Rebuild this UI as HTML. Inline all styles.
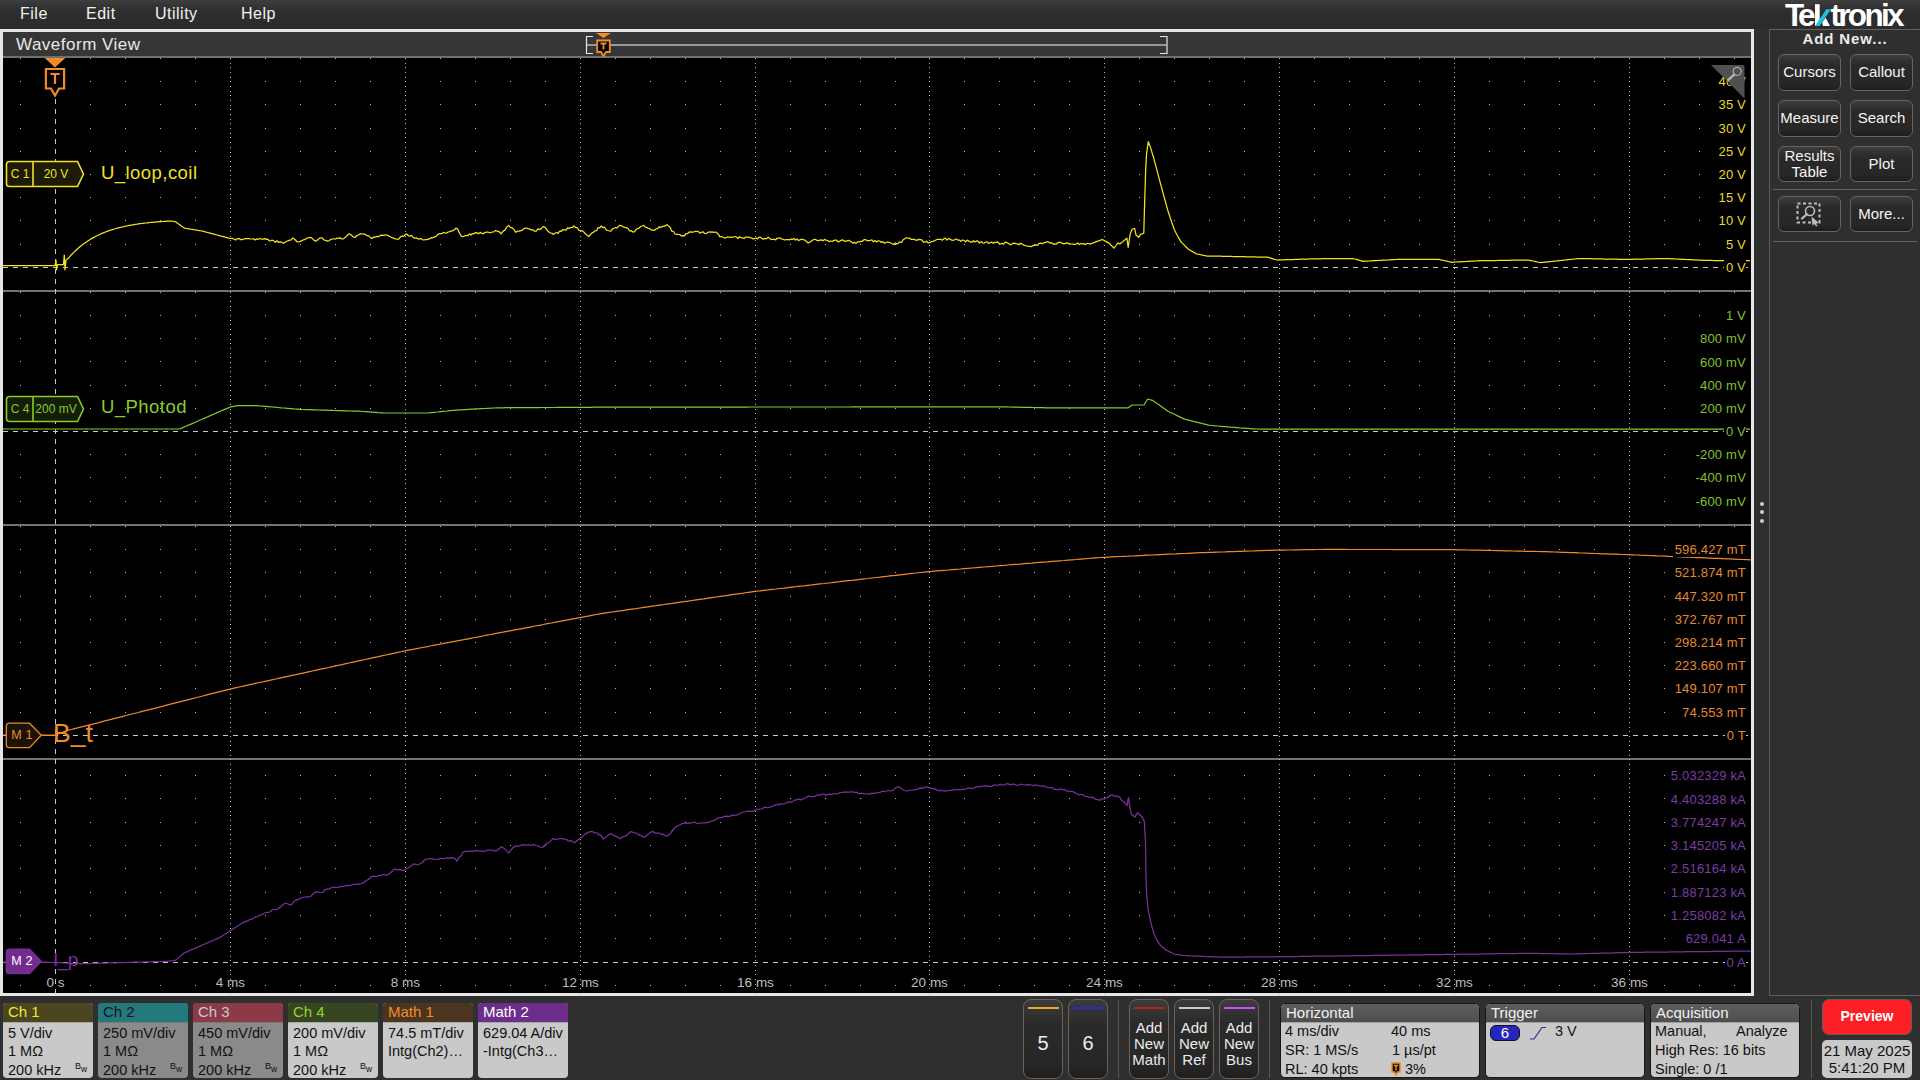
<!DOCTYPE html><html><head><meta charset="utf-8"><title>Tektronix Waveform View</title><style>
*{margin:0;padding:0;box-sizing:border-box}
html,body{width:1920px;height:1080px;overflow:hidden;background:#2f2f2f;font-family:"Liberation Sans",sans-serif}
.a{position:absolute}
.menu{left:0;top:0;width:1920px;height:29px;background:linear-gradient(#3e3e3e,#303030 9px,#2d2d2d 14px,#2c2c2c)}
.mi{top:5px;font-size:16px;color:#f2f2f2;letter-spacing:0.5px}
.btn{position:absolute;border:1px solid #6b625c;border-radius:6px;background:linear-gradient(#3c3c3c,#2a2a2a 30%,#262626 85%,#1e1e1e);color:#f4f4f4;text-align:center;font-size:15px}
.badge{position:absolute;border-radius:4px;overflow:hidden;background:#c8c8c8}
.bh{position:absolute;left:0;top:0;width:100%;height:19px;font-size:15px;padding-left:5px;line-height:17px}
.bb{position:absolute;left:0;top:19px;width:100%;bottom:0;border-top:1px solid #9a9a9a;font-size:14.5px;color:#111;padding-left:5px;line-height:19px;padding-top:0px}
.lab{position:absolute;font-size:13px;text-align:right;width:160px;line-height:14px}.lab span{background:#000;padding:0 0 0 2px;letter-spacing:0.2px}
.xl{position:absolute;font-size:13.5px;color:#bdbdbd;text-align:center;width:80px;line-height:16px}
.bw{position:absolute;font-size:9px;color:#111;line-height:9px}
</style></head><body><div class="a menu"></div><div class="a mi" style="left:20px">File</div><div class="a mi" style="left:86px">Edit</div><div class="a mi" style="left:155px">Utility</div><div class="a mi" style="left:241px">Help</div><div class="a" style="left:0;top:29px;width:1754px;height:967px;background:#e6e6e6"></div><div class="a" style="left:3px;top:32px;width:1748px;height:24px;background:#363636"></div><div class="a" style="left:3px;top:56px;width:1748px;height:2px;background:#6f6f6f"></div><div class="a" style="left:16px;top:35px;font-size:17px;color:#e8e8e8;letter-spacing:0.5px">Waveform View</div><div class="a" style="left:3px;top:58px;width:1748px;height:935px;background:#000"></div><div class="a" style="left:1769px;top:29px;width:1px;height:967px;background:#5a5a5a"></div><div class="a" style="left:1769px;top:29px;width:151px;height:1px;background:#6a5f58"></div><div class="a" style="left:1769px;top:995px;width:151px;height:1px;background:#6a5f58"></div><div class="a" style="left:1785px;top:-2px;font-size:31.5px;font-weight:bold;color:#fff;letter-spacing:-4px;line-height:34px">Te</div><svg class="a" style="left:1815px;top:0" width="18" height="30" viewBox="0 0 18 30"><rect x="0" y="4.2" width="4.7" height="21.8" fill="#fff"/><path d="M8 26H15L10.6 17.8L7.2 22.6Z" fill="#fff"/><path d="M0 26H4.6L15.9 9.2H11.3Z" fill="#1fc0e2"/></svg><div class="a" style="left:1830.5px;top:-2px;font-size:31.5px;font-weight:bold;color:#fff;letter-spacing:-2.7px;line-height:34px">tronix</div><div class="a" style="left:1770px;top:30px;width:150px;text-align:center;font-size:15px;font-weight:bold;color:#ececec;letter-spacing:0.9px">Add New...</div><div class="btn" style="left:1778px;top:54px;width:63px;height:37px;font-size:15px;line-height:33px;">Cursors</div><div class="btn" style="left:1850px;top:54px;width:63px;height:37px;font-size:15px;line-height:33px;">Callout</div><div class="btn" style="left:1778px;top:100px;width:63px;height:37px;font-size:15px;line-height:33px;">Measure</div><div class="btn" style="left:1850px;top:100px;width:63px;height:37px;font-size:15px;line-height:33px;">Search</div><div class="btn" style="left:1778px;top:146px;width:63px;height:36px;font-size:15px;"><div style="padding-top:1px;line-height:16px">Results<br>Table</div></div><div class="btn" style="left:1850px;top:146px;width:63px;height:36px;font-size:15px;line-height:33px;">Plot</div><div class="a" style="left:1773px;top:189px;width:144px;height:1px;background:#6a5f58"></div><div class="btn" style="left:1778px;top:196px;width:63px;height:36px;font-size:15px;"></div><div class="btn" style="left:1850px;top:196px;width:63px;height:36px;font-size:15px;line-height:33px;">More...</div><div class="a" style="left:1773px;top:241px;width:144px;height:1px;background:#6a5f58"></div><svg class="a" style="left:1795px;top:200px" width="30" height="28" viewBox="0 0 30 28">
<rect x="2.5" y="3.5" width="22" height="19" fill="none" stroke="#bdbdbd" stroke-width="2" stroke-dasharray="3 2.5"/>
<circle cx="15" cy="11" r="4.5" fill="none" stroke="#bdbdbd" stroke-width="1.6"/>
<line x1="11.8" y1="14.2" x2="7" y2="18.5" stroke="#bdbdbd" stroke-width="2.2" stroke-linecap="round"/>
<path d="M16.5 19.5 L24 26 L21 26.5 L22.5 29 L21 29.5 L19.5 27 L17.5 28.5 Z" fill="#bdbdbd" transform="translate(0,-3)"/>
</svg><div class="a" style="left:1760px;top:502px;width:4px;height:4px;border-radius:2px;background:#cfcfcf"></div><div class="a" style="left:1760px;top:510px;width:4px;height:4px;border-radius:2px;background:#cfcfcf"></div><div class="a" style="left:1760px;top:519px;width:4px;height:4px;border-radius:2px;background:#cfcfcf"></div><div class="badge" style="left:3px;top:1003px;width:90px;height:75px;background:#c9c9c9"><div class="bh" style="background:#4b4520;color:#f3e82e">Ch 1</div><div class="bb" style="border-top-color:#a8a8a8"><div class="a" style="left:5px;top:0.5px;white-space:nowrap;font-size:14.5px;color:#111">5 V/div</div><div class="a" style="left:5px;top:19.0px;white-space:nowrap;font-size:14.5px;color:#111">1 M&Omega;</div><div class="a" style="left:5px;top:37.5px;white-space:nowrap;font-size:14.5px;color:#111">200 kHz</div><div class="bw" style="left:72px;top:39px">B<span style="position:relative;top:3px;font-size:8.5px">w</span></div></div></div><div class="badge" style="left:98px;top:1003px;width:90px;height:75px;background:#8a8a8a"><div class="bh" style="background:#24797d;color:#141414">Ch 2</div><div class="bb" style="border-top-color:#7a7a7a"><div class="a" style="left:5px;top:0.5px;white-space:nowrap;font-size:14.5px;color:#111">250 mV/div</div><div class="a" style="left:5px;top:19.0px;white-space:nowrap;font-size:14.5px;color:#111">1 M&Omega;</div><div class="a" style="left:5px;top:37.5px;white-space:nowrap;font-size:14.5px;color:#111">200 kHz</div><div class="bw" style="left:72px;top:39px">B<span style="position:relative;top:3px;font-size:8.5px">w</span></div></div></div><div class="badge" style="left:193px;top:1003px;width:90px;height:75px;background:#8a8a8a"><div class="bh" style="background:#8c3a47;color:#c9c9c9">Ch 3</div><div class="bb" style="border-top-color:#7a7a7a"><div class="a" style="left:5px;top:0.5px;white-space:nowrap;font-size:14.5px;color:#111">450 mV/div</div><div class="a" style="left:5px;top:19.0px;white-space:nowrap;font-size:14.5px;color:#111">1 M&Omega;</div><div class="a" style="left:5px;top:37.5px;white-space:nowrap;font-size:14.5px;color:#111">200 kHz</div><div class="bw" style="left:72px;top:39px">B<span style="position:relative;top:3px;font-size:8.5px">w</span></div></div></div><div class="badge" style="left:288px;top:1003px;width:90px;height:75px;background:#c9c9c9"><div class="bh" style="background:#374620;color:#90d62c">Ch 4</div><div class="bb" style="border-top-color:#a8a8a8"><div class="a" style="left:5px;top:0.5px;white-space:nowrap;font-size:14.5px;color:#111">200 mV/div</div><div class="a" style="left:5px;top:19.0px;white-space:nowrap;font-size:14.5px;color:#111">1 M&Omega;</div><div class="a" style="left:5px;top:37.5px;white-space:nowrap;font-size:14.5px;color:#111">200 kHz</div><div class="bw" style="left:72px;top:39px">B<span style="position:relative;top:3px;font-size:8.5px">w</span></div></div></div><div class="badge" style="left:383px;top:1003px;width:90px;height:75px;background:#c9c9c9"><div class="bh" style="background:#4b3420;color:#f28d28">Math 1</div><div class="bb" style="border-top-color:#a8a8a8"><div class="a" style="left:5px;top:0.5px;white-space:nowrap;font-size:14.5px;color:#111">74.5 mT/div</div><div class="a" style="left:5px;top:19.0px;white-space:nowrap;font-size:14.5px;color:#111">Intg(Ch2)&hellip;</div></div></div><div class="badge" style="left:478px;top:1003px;width:90px;height:75px;background:#c9c9c9"><div class="bh" style="background:#6d2d8c;color:#ffffff">Math 2</div><div class="bb" style="border-top-color:#a8a8a8"><div class="a" style="left:5px;top:0.5px;white-space:nowrap;font-size:14.5px;color:#111">629.04 A/div</div><div class="a" style="left:5px;top:19.0px;white-space:nowrap;font-size:14.5px;color:#111">-Intg(Ch3&hellip;</div></div></div><div class="btn" style="left:1023px;top:999px;width:40px;height:80px;border-radius:8px"><div class="a" style="left:3.5px;top:7px;width:31px;height:2px;background:#f5a12e"></div><div class="a" style="left:0;top:31px;width:38px;text-align:center;font-size:20px;line-height:24px;color:#ececec">5</div></div><div class="btn" style="left:1068px;top:999px;width:40px;height:80px;border-radius:8px"><div class="a" style="left:3.5px;top:7px;width:31px;height:2px;background:#2a2ad2"></div><div class="a" style="left:0;top:31px;width:38px;text-align:center;font-size:20px;line-height:24px;color:#ececec">6</div></div><div class="a" style="left:1118px;top:1000px;width:1px;height:78px;background:#5c544e"></div><div class="btn" style="left:1129px;top:999px;width:40px;height:80px;border-radius:8px"><div class="a" style="left:3.5px;top:7px;width:31px;height:2px;background:#b22424"></div><div class="a" style="left:0;top:20px;width:38px;text-align:center;font-size:15px;line-height:16px;color:#ececec">Add<br>New<br>Math</div></div><div class="btn" style="left:1174px;top:999px;width:40px;height:80px;border-radius:8px"><div class="a" style="left:3.5px;top:7px;width:31px;height:2px;background:#c3c6d8"></div><div class="a" style="left:0;top:20px;width:38px;text-align:center;font-size:15px;line-height:16px;color:#ececec">Add<br>New<br>Ref</div></div><div class="btn" style="left:1219px;top:999px;width:40px;height:80px;border-radius:8px"><div class="a" style="left:3.5px;top:7px;width:31px;height:2px;background:#c455f2"></div><div class="a" style="left:0;top:20px;width:38px;text-align:center;font-size:15px;line-height:16px;color:#ececec">Add<br>New<br>Bus</div></div><div class="a" style="left:1269px;top:1000px;width:1px;height:78px;background:#5c544e"></div><div class="badge" style="left:1280px;top:1003px;width:200px;height:75px;background:#c9c9c9;border-radius:5px;border:1px solid #161616"><div class="bh" style="background:linear-gradient(#5e5e5e,#4e4e4e);color:#f2f2f2;height:18px;line-height:18px;font-size:15px">Horizontal</div><div class="a" style="left:0;top:18px;width:100%;height:1px;background:#a0a0a0"></div><div class="a" style="left:4px;top:19px;font-size:14.5px;color:#111;white-space:nowrap;">4 ms/div</div><div class="a" style="left:110px;top:19px;font-size:14.5px;color:#111;white-space:nowrap;">40 ms</div><div class="a" style="left:4px;top:38px;font-size:14.5px;color:#111;white-space:nowrap;">SR: 1 MS/s</div><div class="a" style="left:111px;top:38px;font-size:14.5px;color:#111;white-space:nowrap;">1 &micro;s/pt</div><div class="a" style="left:4px;top:57px;font-size:14.5px;color:#111;white-space:nowrap;">RL: 40 kpts</div><div class="a" style="left:124px;top:57px;font-size:14.5px;color:#111;white-space:nowrap;">3%</div><svg class="a" style="left:110px;top:58px" width="10" height="14" viewBox="0 0 10 14"><path d="M1 1H9V10H6.5L5 13L3.5 10H1Z" fill="#111" stroke="#f08a24" stroke-width="1.5"/><path d="M3 3.5H7M5 3.5V8.5" stroke="#f08a24" stroke-width="1.4"/></svg></div><div class="badge" style="left:1485px;top:1003px;width:160px;height:75px;background:#c9c9c9;border-radius:5px;border:1px solid #161616"><div class="bh" style="background:linear-gradient(#5e5e5e,#4e4e4e);color:#f2f2f2;height:18px;line-height:18px;font-size:15px">Trigger</div><div class="a" style="left:0;top:18px;width:100%;height:1px;background:#a0a0a0"></div><div class="a" style="left:4px;top:21px;width:30px;height:16px;border-radius:6px;background:#2626bc;border:1px solid #111;color:#fff;text-align:center;font-size:15px;line-height:14px">6</div><svg class="a" style="left:43px;top:22px" width="18" height="14" viewBox="0 0 18 14"><path d="M1 13H5L13 1.5H17" fill="none" stroke="#2a2a8a" stroke-width="1.2"/></svg><div class="a" style="left:69px;top:19px;font-size:14.5px;color:#111;white-space:nowrap;">3 V</div></div><div class="badge" style="left:1650px;top:1003px;width:150px;height:75px;background:#c9c9c9;border-radius:5px;border:1px solid #161616"><div class="bh" style="background:linear-gradient(#5e5e5e,#4e4e4e);color:#f2f2f2;height:18px;line-height:18px;font-size:15px">Acquisition</div><div class="a" style="left:0;top:18px;width:100%;height:1px;background:#a0a0a0"></div><div class="a" style="left:4px;top:19px;font-size:14.5px;color:#111;white-space:nowrap;">Manual,</div><div class="a" style="left:85px;top:19px;font-size:14.5px;color:#111;white-space:nowrap;">Analyze</div><div class="a" style="left:4px;top:38px;font-size:14.5px;color:#111;white-space:nowrap;">High Res: 16 bits</div><div class="a" style="left:4px;top:57px;font-size:14.5px;color:#111;white-space:nowrap;">Single: 0 /1</div></div><div class="a" style="left:1811px;top:1000px;width:1px;height:78px;background:#5c544e"></div><div class="a" style="left:1822px;top:999px;width:90px;height:36px;border-radius:7px;background:#fd1f26;border:1px solid #6a5a5a;color:#fff;font-weight:bold;font-size:14px;text-align:center;line-height:33px">Preview</div><div class="a" style="left:1822px;top:1040px;width:90px;height:38px;border-radius:5px;background:#c9c9c9;color:#111;font-size:15px;text-align:center;line-height:17px;padding-top:2px">21 May 2025<br>5:41:20 PM</div><svg class="a" style="left:0;top:0" width="1754" height="996" viewBox="0 0 1754 996" shape-rendering="crispEdges"><rect x="3" y="290" width="1748" height="2" fill="#737373"/><rect x="3" y="524" width="1748" height="2" fill="#737373"/><rect x="3" y="758" width="1748" height="2" fill="#737373"/><path d="M20 58h1v1h-1zM90 58h1v1h-1zM125 58h1v1h-1zM160 58h1v1h-1zM195 58h1v1h-1zM265 58h1v1h-1zM300 58h1v1h-1zM335 58h1v1h-1zM370 58h1v1h-1zM440 58h1v1h-1zM475 58h1v1h-1zM510 58h1v1h-1zM545 58h1v1h-1zM615 58h1v1h-1zM650 58h1v1h-1zM685 58h1v1h-1zM720 58h1v1h-1zM790 58h1v1h-1zM825 58h1v1h-1zM860 58h1v1h-1zM895 58h1v1h-1zM964 58h1v1h-1zM999 58h1v1h-1zM1034 58h1v1h-1zM1069 58h1v1h-1zM1139 58h1v1h-1zM1174 58h1v1h-1zM1209 58h1v1h-1zM1244 58h1v1h-1zM1314 58h1v1h-1zM1349 58h1v1h-1zM1384 58h1v1h-1zM1419 58h1v1h-1zM1489 58h1v1h-1zM1524 58h1v1h-1zM1559 58h1v1h-1zM1594 58h1v1h-1zM1664 58h1v1h-1zM1699 58h1v1h-1zM1734 58h1v1h-1zM1769 58h1v1h-1zM1664 58h1v1h-1zM1699 58h1v1h-1zM1734 58h1v1h-1zM20 81h1v1h-1zM90 81h1v1h-1zM125 81h1v1h-1zM160 81h1v1h-1zM195 81h1v1h-1zM265 81h1v1h-1zM300 81h1v1h-1zM335 81h1v1h-1zM370 81h1v1h-1zM440 81h1v1h-1zM475 81h1v1h-1zM510 81h1v1h-1zM545 81h1v1h-1zM615 81h1v1h-1zM650 81h1v1h-1zM685 81h1v1h-1zM720 81h1v1h-1zM790 81h1v1h-1zM825 81h1v1h-1zM860 81h1v1h-1zM895 81h1v1h-1zM964 81h1v1h-1zM999 81h1v1h-1zM1034 81h1v1h-1zM1069 81h1v1h-1zM1139 81h1v1h-1zM1174 81h1v1h-1zM1209 81h1v1h-1zM1244 81h1v1h-1zM1314 81h1v1h-1zM1349 81h1v1h-1zM1384 81h1v1h-1zM1419 81h1v1h-1zM1489 81h1v1h-1zM1524 81h1v1h-1zM1559 81h1v1h-1zM1594 81h1v1h-1zM1664 81h1v1h-1zM1699 81h1v1h-1zM1734 81h1v1h-1zM1769 81h1v1h-1zM1664 81h1v1h-1zM1699 81h1v1h-1zM1734 81h1v1h-1zM20 104h1v1h-1zM90 104h1v1h-1zM125 104h1v1h-1zM160 104h1v1h-1zM195 104h1v1h-1zM265 104h1v1h-1zM300 104h1v1h-1zM335 104h1v1h-1zM370 104h1v1h-1zM440 104h1v1h-1zM475 104h1v1h-1zM510 104h1v1h-1zM545 104h1v1h-1zM615 104h1v1h-1zM650 104h1v1h-1zM685 104h1v1h-1zM720 104h1v1h-1zM790 104h1v1h-1zM825 104h1v1h-1zM860 104h1v1h-1zM895 104h1v1h-1zM964 104h1v1h-1zM999 104h1v1h-1zM1034 104h1v1h-1zM1069 104h1v1h-1zM1139 104h1v1h-1zM1174 104h1v1h-1zM1209 104h1v1h-1zM1244 104h1v1h-1zM1314 104h1v1h-1zM1349 104h1v1h-1zM1384 104h1v1h-1zM1419 104h1v1h-1zM1489 104h1v1h-1zM1524 104h1v1h-1zM1559 104h1v1h-1zM1594 104h1v1h-1zM1664 104h1v1h-1zM1699 104h1v1h-1zM1734 104h1v1h-1zM1769 104h1v1h-1zM1664 104h1v1h-1zM1699 104h1v1h-1zM1734 104h1v1h-1zM20 128h1v1h-1zM90 128h1v1h-1zM125 128h1v1h-1zM160 128h1v1h-1zM195 128h1v1h-1zM265 128h1v1h-1zM300 128h1v1h-1zM335 128h1v1h-1zM370 128h1v1h-1zM440 128h1v1h-1zM475 128h1v1h-1zM510 128h1v1h-1zM545 128h1v1h-1zM615 128h1v1h-1zM650 128h1v1h-1zM685 128h1v1h-1zM720 128h1v1h-1zM790 128h1v1h-1zM825 128h1v1h-1zM860 128h1v1h-1zM895 128h1v1h-1zM964 128h1v1h-1zM999 128h1v1h-1zM1034 128h1v1h-1zM1069 128h1v1h-1zM1139 128h1v1h-1zM1174 128h1v1h-1zM1209 128h1v1h-1zM1244 128h1v1h-1zM1314 128h1v1h-1zM1349 128h1v1h-1zM1384 128h1v1h-1zM1419 128h1v1h-1zM1489 128h1v1h-1zM1524 128h1v1h-1zM1559 128h1v1h-1zM1594 128h1v1h-1zM1664 128h1v1h-1zM1699 128h1v1h-1zM1734 128h1v1h-1zM1769 128h1v1h-1zM1664 128h1v1h-1zM1699 128h1v1h-1zM1734 128h1v1h-1zM20 151h1v1h-1zM90 151h1v1h-1zM125 151h1v1h-1zM160 151h1v1h-1zM195 151h1v1h-1zM265 151h1v1h-1zM300 151h1v1h-1zM335 151h1v1h-1zM370 151h1v1h-1zM440 151h1v1h-1zM475 151h1v1h-1zM510 151h1v1h-1zM545 151h1v1h-1zM615 151h1v1h-1zM650 151h1v1h-1zM685 151h1v1h-1zM720 151h1v1h-1zM790 151h1v1h-1zM825 151h1v1h-1zM860 151h1v1h-1zM895 151h1v1h-1zM964 151h1v1h-1zM999 151h1v1h-1zM1034 151h1v1h-1zM1069 151h1v1h-1zM1139 151h1v1h-1zM1174 151h1v1h-1zM1209 151h1v1h-1zM1244 151h1v1h-1zM1314 151h1v1h-1zM1349 151h1v1h-1zM1384 151h1v1h-1zM1419 151h1v1h-1zM1489 151h1v1h-1zM1524 151h1v1h-1zM1559 151h1v1h-1zM1594 151h1v1h-1zM1664 151h1v1h-1zM1699 151h1v1h-1zM1734 151h1v1h-1zM1769 151h1v1h-1zM1664 151h1v1h-1zM1699 151h1v1h-1zM1734 151h1v1h-1zM20 174h1v1h-1zM90 174h1v1h-1zM125 174h1v1h-1zM160 174h1v1h-1zM195 174h1v1h-1zM265 174h1v1h-1zM300 174h1v1h-1zM335 174h1v1h-1zM370 174h1v1h-1zM440 174h1v1h-1zM475 174h1v1h-1zM510 174h1v1h-1zM545 174h1v1h-1zM615 174h1v1h-1zM650 174h1v1h-1zM685 174h1v1h-1zM720 174h1v1h-1zM790 174h1v1h-1zM825 174h1v1h-1zM860 174h1v1h-1zM895 174h1v1h-1zM964 174h1v1h-1zM999 174h1v1h-1zM1034 174h1v1h-1zM1069 174h1v1h-1zM1139 174h1v1h-1zM1174 174h1v1h-1zM1209 174h1v1h-1zM1244 174h1v1h-1zM1314 174h1v1h-1zM1349 174h1v1h-1zM1384 174h1v1h-1zM1419 174h1v1h-1zM1489 174h1v1h-1zM1524 174h1v1h-1zM1559 174h1v1h-1zM1594 174h1v1h-1zM1664 174h1v1h-1zM1699 174h1v1h-1zM1734 174h1v1h-1zM1769 174h1v1h-1zM1664 174h1v1h-1zM1699 174h1v1h-1zM1734 174h1v1h-1zM20 197h1v1h-1zM90 197h1v1h-1zM125 197h1v1h-1zM160 197h1v1h-1zM195 197h1v1h-1zM265 197h1v1h-1zM300 197h1v1h-1zM335 197h1v1h-1zM370 197h1v1h-1zM440 197h1v1h-1zM475 197h1v1h-1zM510 197h1v1h-1zM545 197h1v1h-1zM615 197h1v1h-1zM650 197h1v1h-1zM685 197h1v1h-1zM720 197h1v1h-1zM790 197h1v1h-1zM825 197h1v1h-1zM860 197h1v1h-1zM895 197h1v1h-1zM964 197h1v1h-1zM999 197h1v1h-1zM1034 197h1v1h-1zM1069 197h1v1h-1zM1139 197h1v1h-1zM1174 197h1v1h-1zM1209 197h1v1h-1zM1244 197h1v1h-1zM1314 197h1v1h-1zM1349 197h1v1h-1zM1384 197h1v1h-1zM1419 197h1v1h-1zM1489 197h1v1h-1zM1524 197h1v1h-1zM1559 197h1v1h-1zM1594 197h1v1h-1zM1664 197h1v1h-1zM1699 197h1v1h-1zM1734 197h1v1h-1zM1769 197h1v1h-1zM1664 197h1v1h-1zM1699 197h1v1h-1zM1734 197h1v1h-1zM20 220h1v1h-1zM90 220h1v1h-1zM125 220h1v1h-1zM160 220h1v1h-1zM195 220h1v1h-1zM265 220h1v1h-1zM300 220h1v1h-1zM335 220h1v1h-1zM370 220h1v1h-1zM440 220h1v1h-1zM475 220h1v1h-1zM510 220h1v1h-1zM545 220h1v1h-1zM615 220h1v1h-1zM650 220h1v1h-1zM685 220h1v1h-1zM720 220h1v1h-1zM790 220h1v1h-1zM825 220h1v1h-1zM860 220h1v1h-1zM895 220h1v1h-1zM964 220h1v1h-1zM999 220h1v1h-1zM1034 220h1v1h-1zM1069 220h1v1h-1zM1139 220h1v1h-1zM1174 220h1v1h-1zM1209 220h1v1h-1zM1244 220h1v1h-1zM1314 220h1v1h-1zM1349 220h1v1h-1zM1384 220h1v1h-1zM1419 220h1v1h-1zM1489 220h1v1h-1zM1524 220h1v1h-1zM1559 220h1v1h-1zM1594 220h1v1h-1zM1664 220h1v1h-1zM1699 220h1v1h-1zM1734 220h1v1h-1zM1769 220h1v1h-1zM1664 220h1v1h-1zM1699 220h1v1h-1zM1734 220h1v1h-1zM20 244h1v1h-1zM90 244h1v1h-1zM125 244h1v1h-1zM160 244h1v1h-1zM195 244h1v1h-1zM265 244h1v1h-1zM300 244h1v1h-1zM335 244h1v1h-1zM370 244h1v1h-1zM440 244h1v1h-1zM475 244h1v1h-1zM510 244h1v1h-1zM545 244h1v1h-1zM615 244h1v1h-1zM650 244h1v1h-1zM685 244h1v1h-1zM720 244h1v1h-1zM790 244h1v1h-1zM825 244h1v1h-1zM860 244h1v1h-1zM895 244h1v1h-1zM964 244h1v1h-1zM999 244h1v1h-1zM1034 244h1v1h-1zM1069 244h1v1h-1zM1139 244h1v1h-1zM1174 244h1v1h-1zM1209 244h1v1h-1zM1244 244h1v1h-1zM1314 244h1v1h-1zM1349 244h1v1h-1zM1384 244h1v1h-1zM1419 244h1v1h-1zM1489 244h1v1h-1zM1524 244h1v1h-1zM1559 244h1v1h-1zM1594 244h1v1h-1zM1664 244h1v1h-1zM1699 244h1v1h-1zM1734 244h1v1h-1zM1769 244h1v1h-1zM1664 244h1v1h-1zM1699 244h1v1h-1zM1734 244h1v1h-1zM20 292h1v1h-1zM90 292h1v1h-1zM125 292h1v1h-1zM160 292h1v1h-1zM195 292h1v1h-1zM265 292h1v1h-1zM300 292h1v1h-1zM335 292h1v1h-1zM370 292h1v1h-1zM440 292h1v1h-1zM475 292h1v1h-1zM510 292h1v1h-1zM545 292h1v1h-1zM615 292h1v1h-1zM650 292h1v1h-1zM685 292h1v1h-1zM720 292h1v1h-1zM790 292h1v1h-1zM825 292h1v1h-1zM860 292h1v1h-1zM895 292h1v1h-1zM964 292h1v1h-1zM999 292h1v1h-1zM1034 292h1v1h-1zM1069 292h1v1h-1zM1139 292h1v1h-1zM1174 292h1v1h-1zM1209 292h1v1h-1zM1244 292h1v1h-1zM1314 292h1v1h-1zM1349 292h1v1h-1zM1384 292h1v1h-1zM1419 292h1v1h-1zM1489 292h1v1h-1zM1524 292h1v1h-1zM1559 292h1v1h-1zM1594 292h1v1h-1zM1664 292h1v1h-1zM1699 292h1v1h-1zM1734 292h1v1h-1zM1769 292h1v1h-1zM1664 292h1v1h-1zM1699 292h1v1h-1zM1734 292h1v1h-1zM20 315h1v1h-1zM90 315h1v1h-1zM125 315h1v1h-1zM160 315h1v1h-1zM195 315h1v1h-1zM265 315h1v1h-1zM300 315h1v1h-1zM335 315h1v1h-1zM370 315h1v1h-1zM440 315h1v1h-1zM475 315h1v1h-1zM510 315h1v1h-1zM545 315h1v1h-1zM615 315h1v1h-1zM650 315h1v1h-1zM685 315h1v1h-1zM720 315h1v1h-1zM790 315h1v1h-1zM825 315h1v1h-1zM860 315h1v1h-1zM895 315h1v1h-1zM964 315h1v1h-1zM999 315h1v1h-1zM1034 315h1v1h-1zM1069 315h1v1h-1zM1139 315h1v1h-1zM1174 315h1v1h-1zM1209 315h1v1h-1zM1244 315h1v1h-1zM1314 315h1v1h-1zM1349 315h1v1h-1zM1384 315h1v1h-1zM1419 315h1v1h-1zM1489 315h1v1h-1zM1524 315h1v1h-1zM1559 315h1v1h-1zM1594 315h1v1h-1zM1664 315h1v1h-1zM1699 315h1v1h-1zM1734 315h1v1h-1zM1769 315h1v1h-1zM1664 315h1v1h-1zM1699 315h1v1h-1zM1734 315h1v1h-1zM20 338h1v1h-1zM90 338h1v1h-1zM125 338h1v1h-1zM160 338h1v1h-1zM195 338h1v1h-1zM265 338h1v1h-1zM300 338h1v1h-1zM335 338h1v1h-1zM370 338h1v1h-1zM440 338h1v1h-1zM475 338h1v1h-1zM510 338h1v1h-1zM545 338h1v1h-1zM615 338h1v1h-1zM650 338h1v1h-1zM685 338h1v1h-1zM720 338h1v1h-1zM790 338h1v1h-1zM825 338h1v1h-1zM860 338h1v1h-1zM895 338h1v1h-1zM964 338h1v1h-1zM999 338h1v1h-1zM1034 338h1v1h-1zM1069 338h1v1h-1zM1139 338h1v1h-1zM1174 338h1v1h-1zM1209 338h1v1h-1zM1244 338h1v1h-1zM1314 338h1v1h-1zM1349 338h1v1h-1zM1384 338h1v1h-1zM1419 338h1v1h-1zM1489 338h1v1h-1zM1524 338h1v1h-1zM1559 338h1v1h-1zM1594 338h1v1h-1zM1664 338h1v1h-1zM1699 338h1v1h-1zM1734 338h1v1h-1zM1769 338h1v1h-1zM1664 338h1v1h-1zM1699 338h1v1h-1zM1734 338h1v1h-1zM20 361h1v1h-1zM90 361h1v1h-1zM125 361h1v1h-1zM160 361h1v1h-1zM195 361h1v1h-1zM265 361h1v1h-1zM300 361h1v1h-1zM335 361h1v1h-1zM370 361h1v1h-1zM440 361h1v1h-1zM475 361h1v1h-1zM510 361h1v1h-1zM545 361h1v1h-1zM615 361h1v1h-1zM650 361h1v1h-1zM685 361h1v1h-1zM720 361h1v1h-1zM790 361h1v1h-1zM825 361h1v1h-1zM860 361h1v1h-1zM895 361h1v1h-1zM964 361h1v1h-1zM999 361h1v1h-1zM1034 361h1v1h-1zM1069 361h1v1h-1zM1139 361h1v1h-1zM1174 361h1v1h-1zM1209 361h1v1h-1zM1244 361h1v1h-1zM1314 361h1v1h-1zM1349 361h1v1h-1zM1384 361h1v1h-1zM1419 361h1v1h-1zM1489 361h1v1h-1zM1524 361h1v1h-1zM1559 361h1v1h-1zM1594 361h1v1h-1zM1664 361h1v1h-1zM1699 361h1v1h-1zM1734 361h1v1h-1zM1769 361h1v1h-1zM1664 361h1v1h-1zM1699 361h1v1h-1zM1734 361h1v1h-1zM20 385h1v1h-1zM90 385h1v1h-1zM125 385h1v1h-1zM160 385h1v1h-1zM195 385h1v1h-1zM265 385h1v1h-1zM300 385h1v1h-1zM335 385h1v1h-1zM370 385h1v1h-1zM440 385h1v1h-1zM475 385h1v1h-1zM510 385h1v1h-1zM545 385h1v1h-1zM615 385h1v1h-1zM650 385h1v1h-1zM685 385h1v1h-1zM720 385h1v1h-1zM790 385h1v1h-1zM825 385h1v1h-1zM860 385h1v1h-1zM895 385h1v1h-1zM964 385h1v1h-1zM999 385h1v1h-1zM1034 385h1v1h-1zM1069 385h1v1h-1zM1139 385h1v1h-1zM1174 385h1v1h-1zM1209 385h1v1h-1zM1244 385h1v1h-1zM1314 385h1v1h-1zM1349 385h1v1h-1zM1384 385h1v1h-1zM1419 385h1v1h-1zM1489 385h1v1h-1zM1524 385h1v1h-1zM1559 385h1v1h-1zM1594 385h1v1h-1zM1664 385h1v1h-1zM1699 385h1v1h-1zM1734 385h1v1h-1zM1769 385h1v1h-1zM1664 385h1v1h-1zM1699 385h1v1h-1zM1734 385h1v1h-1zM20 408h1v1h-1zM90 408h1v1h-1zM125 408h1v1h-1zM160 408h1v1h-1zM195 408h1v1h-1zM265 408h1v1h-1zM300 408h1v1h-1zM335 408h1v1h-1zM370 408h1v1h-1zM440 408h1v1h-1zM475 408h1v1h-1zM510 408h1v1h-1zM545 408h1v1h-1zM615 408h1v1h-1zM650 408h1v1h-1zM685 408h1v1h-1zM720 408h1v1h-1zM790 408h1v1h-1zM825 408h1v1h-1zM860 408h1v1h-1zM895 408h1v1h-1zM964 408h1v1h-1zM999 408h1v1h-1zM1034 408h1v1h-1zM1069 408h1v1h-1zM1139 408h1v1h-1zM1174 408h1v1h-1zM1209 408h1v1h-1zM1244 408h1v1h-1zM1314 408h1v1h-1zM1349 408h1v1h-1zM1384 408h1v1h-1zM1419 408h1v1h-1zM1489 408h1v1h-1zM1524 408h1v1h-1zM1559 408h1v1h-1zM1594 408h1v1h-1zM1664 408h1v1h-1zM1699 408h1v1h-1zM1734 408h1v1h-1zM1769 408h1v1h-1zM1664 408h1v1h-1zM1699 408h1v1h-1zM1734 408h1v1h-1zM20 454h1v1h-1zM90 454h1v1h-1zM125 454h1v1h-1zM160 454h1v1h-1zM195 454h1v1h-1zM265 454h1v1h-1zM300 454h1v1h-1zM335 454h1v1h-1zM370 454h1v1h-1zM440 454h1v1h-1zM475 454h1v1h-1zM510 454h1v1h-1zM545 454h1v1h-1zM615 454h1v1h-1zM650 454h1v1h-1zM685 454h1v1h-1zM720 454h1v1h-1zM790 454h1v1h-1zM825 454h1v1h-1zM860 454h1v1h-1zM895 454h1v1h-1zM964 454h1v1h-1zM999 454h1v1h-1zM1034 454h1v1h-1zM1069 454h1v1h-1zM1139 454h1v1h-1zM1174 454h1v1h-1zM1209 454h1v1h-1zM1244 454h1v1h-1zM1314 454h1v1h-1zM1349 454h1v1h-1zM1384 454h1v1h-1zM1419 454h1v1h-1zM1489 454h1v1h-1zM1524 454h1v1h-1zM1559 454h1v1h-1zM1594 454h1v1h-1zM1664 454h1v1h-1zM1699 454h1v1h-1zM1734 454h1v1h-1zM1769 454h1v1h-1zM1664 454h1v1h-1zM1699 454h1v1h-1zM1734 454h1v1h-1zM20 477h1v1h-1zM90 477h1v1h-1zM125 477h1v1h-1zM160 477h1v1h-1zM195 477h1v1h-1zM265 477h1v1h-1zM300 477h1v1h-1zM335 477h1v1h-1zM370 477h1v1h-1zM440 477h1v1h-1zM475 477h1v1h-1zM510 477h1v1h-1zM545 477h1v1h-1zM615 477h1v1h-1zM650 477h1v1h-1zM685 477h1v1h-1zM720 477h1v1h-1zM790 477h1v1h-1zM825 477h1v1h-1zM860 477h1v1h-1zM895 477h1v1h-1zM964 477h1v1h-1zM999 477h1v1h-1zM1034 477h1v1h-1zM1069 477h1v1h-1zM1139 477h1v1h-1zM1174 477h1v1h-1zM1209 477h1v1h-1zM1244 477h1v1h-1zM1314 477h1v1h-1zM1349 477h1v1h-1zM1384 477h1v1h-1zM1419 477h1v1h-1zM1489 477h1v1h-1zM1524 477h1v1h-1zM1559 477h1v1h-1zM1594 477h1v1h-1zM1664 477h1v1h-1zM1699 477h1v1h-1zM1734 477h1v1h-1zM1769 477h1v1h-1zM1664 477h1v1h-1zM1699 477h1v1h-1zM1734 477h1v1h-1zM20 501h1v1h-1zM90 501h1v1h-1zM125 501h1v1h-1zM160 501h1v1h-1zM195 501h1v1h-1zM265 501h1v1h-1zM300 501h1v1h-1zM335 501h1v1h-1zM370 501h1v1h-1zM440 501h1v1h-1zM475 501h1v1h-1zM510 501h1v1h-1zM545 501h1v1h-1zM615 501h1v1h-1zM650 501h1v1h-1zM685 501h1v1h-1zM720 501h1v1h-1zM790 501h1v1h-1zM825 501h1v1h-1zM860 501h1v1h-1zM895 501h1v1h-1zM964 501h1v1h-1zM999 501h1v1h-1zM1034 501h1v1h-1zM1069 501h1v1h-1zM1139 501h1v1h-1zM1174 501h1v1h-1zM1209 501h1v1h-1zM1244 501h1v1h-1zM1314 501h1v1h-1zM1349 501h1v1h-1zM1384 501h1v1h-1zM1419 501h1v1h-1zM1489 501h1v1h-1zM1524 501h1v1h-1zM1559 501h1v1h-1zM1594 501h1v1h-1zM1664 501h1v1h-1zM1699 501h1v1h-1zM1734 501h1v1h-1zM1769 501h1v1h-1zM1664 501h1v1h-1zM1699 501h1v1h-1zM1734 501h1v1h-1zM20 526h1v1h-1zM90 526h1v1h-1zM125 526h1v1h-1zM160 526h1v1h-1zM195 526h1v1h-1zM265 526h1v1h-1zM300 526h1v1h-1zM335 526h1v1h-1zM370 526h1v1h-1zM440 526h1v1h-1zM475 526h1v1h-1zM510 526h1v1h-1zM545 526h1v1h-1zM615 526h1v1h-1zM650 526h1v1h-1zM685 526h1v1h-1zM720 526h1v1h-1zM790 526h1v1h-1zM825 526h1v1h-1zM860 526h1v1h-1zM895 526h1v1h-1zM964 526h1v1h-1zM999 526h1v1h-1zM1034 526h1v1h-1zM1069 526h1v1h-1zM1139 526h1v1h-1zM1174 526h1v1h-1zM1209 526h1v1h-1zM1244 526h1v1h-1zM1314 526h1v1h-1zM1349 526h1v1h-1zM1384 526h1v1h-1zM1419 526h1v1h-1zM1489 526h1v1h-1zM1524 526h1v1h-1zM1559 526h1v1h-1zM1594 526h1v1h-1zM1664 526h1v1h-1zM1699 526h1v1h-1zM1734 526h1v1h-1zM1769 526h1v1h-1zM1664 526h1v1h-1zM1699 526h1v1h-1zM1734 526h1v1h-1zM20 549h1v1h-1zM90 549h1v1h-1zM125 549h1v1h-1zM160 549h1v1h-1zM195 549h1v1h-1zM265 549h1v1h-1zM300 549h1v1h-1zM335 549h1v1h-1zM370 549h1v1h-1zM440 549h1v1h-1zM475 549h1v1h-1zM510 549h1v1h-1zM545 549h1v1h-1zM615 549h1v1h-1zM650 549h1v1h-1zM685 549h1v1h-1zM720 549h1v1h-1zM790 549h1v1h-1zM825 549h1v1h-1zM860 549h1v1h-1zM895 549h1v1h-1zM964 549h1v1h-1zM999 549h1v1h-1zM1034 549h1v1h-1zM1069 549h1v1h-1zM1139 549h1v1h-1zM1174 549h1v1h-1zM1209 549h1v1h-1zM1244 549h1v1h-1zM1314 549h1v1h-1zM1349 549h1v1h-1zM1384 549h1v1h-1zM1419 549h1v1h-1zM1489 549h1v1h-1zM1524 549h1v1h-1zM1559 549h1v1h-1zM1594 549h1v1h-1zM1664 549h1v1h-1zM1699 549h1v1h-1zM1734 549h1v1h-1zM1769 549h1v1h-1zM1664 549h1v1h-1zM1699 549h1v1h-1zM1734 549h1v1h-1zM20 572h1v1h-1zM90 572h1v1h-1zM125 572h1v1h-1zM160 572h1v1h-1zM195 572h1v1h-1zM265 572h1v1h-1zM300 572h1v1h-1zM335 572h1v1h-1zM370 572h1v1h-1zM440 572h1v1h-1zM475 572h1v1h-1zM510 572h1v1h-1zM545 572h1v1h-1zM615 572h1v1h-1zM650 572h1v1h-1zM685 572h1v1h-1zM720 572h1v1h-1zM790 572h1v1h-1zM825 572h1v1h-1zM860 572h1v1h-1zM895 572h1v1h-1zM964 572h1v1h-1zM999 572h1v1h-1zM1034 572h1v1h-1zM1069 572h1v1h-1zM1139 572h1v1h-1zM1174 572h1v1h-1zM1209 572h1v1h-1zM1244 572h1v1h-1zM1314 572h1v1h-1zM1349 572h1v1h-1zM1384 572h1v1h-1zM1419 572h1v1h-1zM1489 572h1v1h-1zM1524 572h1v1h-1zM1559 572h1v1h-1zM1594 572h1v1h-1zM1664 572h1v1h-1zM1699 572h1v1h-1zM1734 572h1v1h-1zM1769 572h1v1h-1zM1664 572h1v1h-1zM1699 572h1v1h-1zM1734 572h1v1h-1zM20 596h1v1h-1zM90 596h1v1h-1zM125 596h1v1h-1zM160 596h1v1h-1zM195 596h1v1h-1zM265 596h1v1h-1zM300 596h1v1h-1zM335 596h1v1h-1zM370 596h1v1h-1zM440 596h1v1h-1zM475 596h1v1h-1zM510 596h1v1h-1zM545 596h1v1h-1zM615 596h1v1h-1zM650 596h1v1h-1zM685 596h1v1h-1zM720 596h1v1h-1zM790 596h1v1h-1zM825 596h1v1h-1zM860 596h1v1h-1zM895 596h1v1h-1zM964 596h1v1h-1zM999 596h1v1h-1zM1034 596h1v1h-1zM1069 596h1v1h-1zM1139 596h1v1h-1zM1174 596h1v1h-1zM1209 596h1v1h-1zM1244 596h1v1h-1zM1314 596h1v1h-1zM1349 596h1v1h-1zM1384 596h1v1h-1zM1419 596h1v1h-1zM1489 596h1v1h-1zM1524 596h1v1h-1zM1559 596h1v1h-1zM1594 596h1v1h-1zM1664 596h1v1h-1zM1699 596h1v1h-1zM1734 596h1v1h-1zM1769 596h1v1h-1zM1664 596h1v1h-1zM1699 596h1v1h-1zM1734 596h1v1h-1zM20 619h1v1h-1zM90 619h1v1h-1zM125 619h1v1h-1zM160 619h1v1h-1zM195 619h1v1h-1zM265 619h1v1h-1zM300 619h1v1h-1zM335 619h1v1h-1zM370 619h1v1h-1zM440 619h1v1h-1zM475 619h1v1h-1zM510 619h1v1h-1zM545 619h1v1h-1zM615 619h1v1h-1zM650 619h1v1h-1zM685 619h1v1h-1zM720 619h1v1h-1zM790 619h1v1h-1zM825 619h1v1h-1zM860 619h1v1h-1zM895 619h1v1h-1zM964 619h1v1h-1zM999 619h1v1h-1zM1034 619h1v1h-1zM1069 619h1v1h-1zM1139 619h1v1h-1zM1174 619h1v1h-1zM1209 619h1v1h-1zM1244 619h1v1h-1zM1314 619h1v1h-1zM1349 619h1v1h-1zM1384 619h1v1h-1zM1419 619h1v1h-1zM1489 619h1v1h-1zM1524 619h1v1h-1zM1559 619h1v1h-1zM1594 619h1v1h-1zM1664 619h1v1h-1zM1699 619h1v1h-1zM1734 619h1v1h-1zM1769 619h1v1h-1zM1664 619h1v1h-1zM1699 619h1v1h-1zM1734 619h1v1h-1zM20 642h1v1h-1zM90 642h1v1h-1zM125 642h1v1h-1zM160 642h1v1h-1zM195 642h1v1h-1zM265 642h1v1h-1zM300 642h1v1h-1zM335 642h1v1h-1zM370 642h1v1h-1zM440 642h1v1h-1zM475 642h1v1h-1zM510 642h1v1h-1zM545 642h1v1h-1zM615 642h1v1h-1zM650 642h1v1h-1zM685 642h1v1h-1zM720 642h1v1h-1zM790 642h1v1h-1zM825 642h1v1h-1zM860 642h1v1h-1zM895 642h1v1h-1zM964 642h1v1h-1zM999 642h1v1h-1zM1034 642h1v1h-1zM1069 642h1v1h-1zM1139 642h1v1h-1zM1174 642h1v1h-1zM1209 642h1v1h-1zM1244 642h1v1h-1zM1314 642h1v1h-1zM1349 642h1v1h-1zM1384 642h1v1h-1zM1419 642h1v1h-1zM1489 642h1v1h-1zM1524 642h1v1h-1zM1559 642h1v1h-1zM1594 642h1v1h-1zM1664 642h1v1h-1zM1699 642h1v1h-1zM1734 642h1v1h-1zM1769 642h1v1h-1zM1664 642h1v1h-1zM1699 642h1v1h-1zM1734 642h1v1h-1zM20 665h1v1h-1zM90 665h1v1h-1zM125 665h1v1h-1zM160 665h1v1h-1zM195 665h1v1h-1zM265 665h1v1h-1zM300 665h1v1h-1zM335 665h1v1h-1zM370 665h1v1h-1zM440 665h1v1h-1zM475 665h1v1h-1zM510 665h1v1h-1zM545 665h1v1h-1zM615 665h1v1h-1zM650 665h1v1h-1zM685 665h1v1h-1zM720 665h1v1h-1zM790 665h1v1h-1zM825 665h1v1h-1zM860 665h1v1h-1zM895 665h1v1h-1zM964 665h1v1h-1zM999 665h1v1h-1zM1034 665h1v1h-1zM1069 665h1v1h-1zM1139 665h1v1h-1zM1174 665h1v1h-1zM1209 665h1v1h-1zM1244 665h1v1h-1zM1314 665h1v1h-1zM1349 665h1v1h-1zM1384 665h1v1h-1zM1419 665h1v1h-1zM1489 665h1v1h-1zM1524 665h1v1h-1zM1559 665h1v1h-1zM1594 665h1v1h-1zM1664 665h1v1h-1zM1699 665h1v1h-1zM1734 665h1v1h-1zM1769 665h1v1h-1zM1664 665h1v1h-1zM1699 665h1v1h-1zM1734 665h1v1h-1zM20 688h1v1h-1zM90 688h1v1h-1zM125 688h1v1h-1zM160 688h1v1h-1zM195 688h1v1h-1zM265 688h1v1h-1zM300 688h1v1h-1zM335 688h1v1h-1zM370 688h1v1h-1zM440 688h1v1h-1zM475 688h1v1h-1zM510 688h1v1h-1zM545 688h1v1h-1zM615 688h1v1h-1zM650 688h1v1h-1zM685 688h1v1h-1zM720 688h1v1h-1zM790 688h1v1h-1zM825 688h1v1h-1zM860 688h1v1h-1zM895 688h1v1h-1zM964 688h1v1h-1zM999 688h1v1h-1zM1034 688h1v1h-1zM1069 688h1v1h-1zM1139 688h1v1h-1zM1174 688h1v1h-1zM1209 688h1v1h-1zM1244 688h1v1h-1zM1314 688h1v1h-1zM1349 688h1v1h-1zM1384 688h1v1h-1zM1419 688h1v1h-1zM1489 688h1v1h-1zM1524 688h1v1h-1zM1559 688h1v1h-1zM1594 688h1v1h-1zM1664 688h1v1h-1zM1699 688h1v1h-1zM1734 688h1v1h-1zM1769 688h1v1h-1zM1664 688h1v1h-1zM1699 688h1v1h-1zM1734 688h1v1h-1zM20 712h1v1h-1zM90 712h1v1h-1zM125 712h1v1h-1zM160 712h1v1h-1zM195 712h1v1h-1zM265 712h1v1h-1zM300 712h1v1h-1zM335 712h1v1h-1zM370 712h1v1h-1zM440 712h1v1h-1zM475 712h1v1h-1zM510 712h1v1h-1zM545 712h1v1h-1zM615 712h1v1h-1zM650 712h1v1h-1zM685 712h1v1h-1zM720 712h1v1h-1zM790 712h1v1h-1zM825 712h1v1h-1zM860 712h1v1h-1zM895 712h1v1h-1zM964 712h1v1h-1zM999 712h1v1h-1zM1034 712h1v1h-1zM1069 712h1v1h-1zM1139 712h1v1h-1zM1174 712h1v1h-1zM1209 712h1v1h-1zM1244 712h1v1h-1zM1314 712h1v1h-1zM1349 712h1v1h-1zM1384 712h1v1h-1zM1419 712h1v1h-1zM1489 712h1v1h-1zM1524 712h1v1h-1zM1559 712h1v1h-1zM1594 712h1v1h-1zM1664 712h1v1h-1zM1699 712h1v1h-1zM1734 712h1v1h-1zM1769 712h1v1h-1zM1664 712h1v1h-1zM1699 712h1v1h-1zM1734 712h1v1h-1zM20 775h1v1h-1zM90 775h1v1h-1zM125 775h1v1h-1zM160 775h1v1h-1zM195 775h1v1h-1zM265 775h1v1h-1zM300 775h1v1h-1zM335 775h1v1h-1zM370 775h1v1h-1zM440 775h1v1h-1zM475 775h1v1h-1zM510 775h1v1h-1zM545 775h1v1h-1zM615 775h1v1h-1zM650 775h1v1h-1zM685 775h1v1h-1zM720 775h1v1h-1zM790 775h1v1h-1zM825 775h1v1h-1zM860 775h1v1h-1zM895 775h1v1h-1zM964 775h1v1h-1zM999 775h1v1h-1zM1034 775h1v1h-1zM1069 775h1v1h-1zM1139 775h1v1h-1zM1174 775h1v1h-1zM1209 775h1v1h-1zM1244 775h1v1h-1zM1314 775h1v1h-1zM1349 775h1v1h-1zM1384 775h1v1h-1zM1419 775h1v1h-1zM1489 775h1v1h-1zM1524 775h1v1h-1zM1559 775h1v1h-1zM1594 775h1v1h-1zM1664 775h1v1h-1zM1699 775h1v1h-1zM1734 775h1v1h-1zM1769 775h1v1h-1zM1664 775h1v1h-1zM1699 775h1v1h-1zM1734 775h1v1h-1zM20 798h1v1h-1zM90 798h1v1h-1zM125 798h1v1h-1zM160 798h1v1h-1zM195 798h1v1h-1zM265 798h1v1h-1zM300 798h1v1h-1zM335 798h1v1h-1zM370 798h1v1h-1zM440 798h1v1h-1zM475 798h1v1h-1zM510 798h1v1h-1zM545 798h1v1h-1zM615 798h1v1h-1zM650 798h1v1h-1zM685 798h1v1h-1zM720 798h1v1h-1zM790 798h1v1h-1zM825 798h1v1h-1zM860 798h1v1h-1zM895 798h1v1h-1zM964 798h1v1h-1zM999 798h1v1h-1zM1034 798h1v1h-1zM1069 798h1v1h-1zM1139 798h1v1h-1zM1174 798h1v1h-1zM1209 798h1v1h-1zM1244 798h1v1h-1zM1314 798h1v1h-1zM1349 798h1v1h-1zM1384 798h1v1h-1zM1419 798h1v1h-1zM1489 798h1v1h-1zM1524 798h1v1h-1zM1559 798h1v1h-1zM1594 798h1v1h-1zM1664 798h1v1h-1zM1699 798h1v1h-1zM1734 798h1v1h-1zM1769 798h1v1h-1zM1664 798h1v1h-1zM1699 798h1v1h-1zM1734 798h1v1h-1zM20 822h1v1h-1zM90 822h1v1h-1zM125 822h1v1h-1zM160 822h1v1h-1zM195 822h1v1h-1zM265 822h1v1h-1zM300 822h1v1h-1zM335 822h1v1h-1zM370 822h1v1h-1zM440 822h1v1h-1zM475 822h1v1h-1zM510 822h1v1h-1zM545 822h1v1h-1zM615 822h1v1h-1zM650 822h1v1h-1zM685 822h1v1h-1zM720 822h1v1h-1zM790 822h1v1h-1zM825 822h1v1h-1zM860 822h1v1h-1zM895 822h1v1h-1zM964 822h1v1h-1zM999 822h1v1h-1zM1034 822h1v1h-1zM1069 822h1v1h-1zM1139 822h1v1h-1zM1174 822h1v1h-1zM1209 822h1v1h-1zM1244 822h1v1h-1zM1314 822h1v1h-1zM1349 822h1v1h-1zM1384 822h1v1h-1zM1419 822h1v1h-1zM1489 822h1v1h-1zM1524 822h1v1h-1zM1559 822h1v1h-1zM1594 822h1v1h-1zM1664 822h1v1h-1zM1699 822h1v1h-1zM1734 822h1v1h-1zM1769 822h1v1h-1zM1664 822h1v1h-1zM1699 822h1v1h-1zM1734 822h1v1h-1zM20 845h1v1h-1zM90 845h1v1h-1zM125 845h1v1h-1zM160 845h1v1h-1zM195 845h1v1h-1zM265 845h1v1h-1zM300 845h1v1h-1zM335 845h1v1h-1zM370 845h1v1h-1zM440 845h1v1h-1zM475 845h1v1h-1zM510 845h1v1h-1zM545 845h1v1h-1zM615 845h1v1h-1zM650 845h1v1h-1zM685 845h1v1h-1zM720 845h1v1h-1zM790 845h1v1h-1zM825 845h1v1h-1zM860 845h1v1h-1zM895 845h1v1h-1zM964 845h1v1h-1zM999 845h1v1h-1zM1034 845h1v1h-1zM1069 845h1v1h-1zM1139 845h1v1h-1zM1174 845h1v1h-1zM1209 845h1v1h-1zM1244 845h1v1h-1zM1314 845h1v1h-1zM1349 845h1v1h-1zM1384 845h1v1h-1zM1419 845h1v1h-1zM1489 845h1v1h-1zM1524 845h1v1h-1zM1559 845h1v1h-1zM1594 845h1v1h-1zM1664 845h1v1h-1zM1699 845h1v1h-1zM1734 845h1v1h-1zM1769 845h1v1h-1zM1664 845h1v1h-1zM1699 845h1v1h-1zM1734 845h1v1h-1zM20 868h1v1h-1zM90 868h1v1h-1zM125 868h1v1h-1zM160 868h1v1h-1zM195 868h1v1h-1zM265 868h1v1h-1zM300 868h1v1h-1zM335 868h1v1h-1zM370 868h1v1h-1zM440 868h1v1h-1zM475 868h1v1h-1zM510 868h1v1h-1zM545 868h1v1h-1zM615 868h1v1h-1zM650 868h1v1h-1zM685 868h1v1h-1zM720 868h1v1h-1zM790 868h1v1h-1zM825 868h1v1h-1zM860 868h1v1h-1zM895 868h1v1h-1zM964 868h1v1h-1zM999 868h1v1h-1zM1034 868h1v1h-1zM1069 868h1v1h-1zM1139 868h1v1h-1zM1174 868h1v1h-1zM1209 868h1v1h-1zM1244 868h1v1h-1zM1314 868h1v1h-1zM1349 868h1v1h-1zM1384 868h1v1h-1zM1419 868h1v1h-1zM1489 868h1v1h-1zM1524 868h1v1h-1zM1559 868h1v1h-1zM1594 868h1v1h-1zM1664 868h1v1h-1zM1699 868h1v1h-1zM1734 868h1v1h-1zM1769 868h1v1h-1zM1664 868h1v1h-1zM1699 868h1v1h-1zM1734 868h1v1h-1zM20 892h1v1h-1zM90 892h1v1h-1zM125 892h1v1h-1zM160 892h1v1h-1zM195 892h1v1h-1zM265 892h1v1h-1zM300 892h1v1h-1zM335 892h1v1h-1zM370 892h1v1h-1zM440 892h1v1h-1zM475 892h1v1h-1zM510 892h1v1h-1zM545 892h1v1h-1zM615 892h1v1h-1zM650 892h1v1h-1zM685 892h1v1h-1zM720 892h1v1h-1zM790 892h1v1h-1zM825 892h1v1h-1zM860 892h1v1h-1zM895 892h1v1h-1zM964 892h1v1h-1zM999 892h1v1h-1zM1034 892h1v1h-1zM1069 892h1v1h-1zM1139 892h1v1h-1zM1174 892h1v1h-1zM1209 892h1v1h-1zM1244 892h1v1h-1zM1314 892h1v1h-1zM1349 892h1v1h-1zM1384 892h1v1h-1zM1419 892h1v1h-1zM1489 892h1v1h-1zM1524 892h1v1h-1zM1559 892h1v1h-1zM1594 892h1v1h-1zM1664 892h1v1h-1zM1699 892h1v1h-1zM1734 892h1v1h-1zM1769 892h1v1h-1zM1664 892h1v1h-1zM1699 892h1v1h-1zM1734 892h1v1h-1zM20 915h1v1h-1zM90 915h1v1h-1zM125 915h1v1h-1zM160 915h1v1h-1zM195 915h1v1h-1zM265 915h1v1h-1zM300 915h1v1h-1zM335 915h1v1h-1zM370 915h1v1h-1zM440 915h1v1h-1zM475 915h1v1h-1zM510 915h1v1h-1zM545 915h1v1h-1zM615 915h1v1h-1zM650 915h1v1h-1zM685 915h1v1h-1zM720 915h1v1h-1zM790 915h1v1h-1zM825 915h1v1h-1zM860 915h1v1h-1zM895 915h1v1h-1zM964 915h1v1h-1zM999 915h1v1h-1zM1034 915h1v1h-1zM1069 915h1v1h-1zM1139 915h1v1h-1zM1174 915h1v1h-1zM1209 915h1v1h-1zM1244 915h1v1h-1zM1314 915h1v1h-1zM1349 915h1v1h-1zM1384 915h1v1h-1zM1419 915h1v1h-1zM1489 915h1v1h-1zM1524 915h1v1h-1zM1559 915h1v1h-1zM1594 915h1v1h-1zM1664 915h1v1h-1zM1699 915h1v1h-1zM1734 915h1v1h-1zM1769 915h1v1h-1zM1664 915h1v1h-1zM1699 915h1v1h-1zM1734 915h1v1h-1zM20 938h1v1h-1zM90 938h1v1h-1zM125 938h1v1h-1zM160 938h1v1h-1zM195 938h1v1h-1zM265 938h1v1h-1zM300 938h1v1h-1zM335 938h1v1h-1zM370 938h1v1h-1zM440 938h1v1h-1zM475 938h1v1h-1zM510 938h1v1h-1zM545 938h1v1h-1zM615 938h1v1h-1zM650 938h1v1h-1zM685 938h1v1h-1zM720 938h1v1h-1zM790 938h1v1h-1zM825 938h1v1h-1zM860 938h1v1h-1zM895 938h1v1h-1zM964 938h1v1h-1zM999 938h1v1h-1zM1034 938h1v1h-1zM1069 938h1v1h-1zM1139 938h1v1h-1zM1174 938h1v1h-1zM1209 938h1v1h-1zM1244 938h1v1h-1zM1314 938h1v1h-1zM1349 938h1v1h-1zM1384 938h1v1h-1zM1419 938h1v1h-1zM1489 938h1v1h-1zM1524 938h1v1h-1zM1559 938h1v1h-1zM1594 938h1v1h-1zM1664 938h1v1h-1zM1699 938h1v1h-1zM1734 938h1v1h-1zM1769 938h1v1h-1zM1664 938h1v1h-1zM1699 938h1v1h-1zM1734 938h1v1h-1zM20 985h1v1h-1zM90 985h1v1h-1zM125 985h1v1h-1zM160 985h1v1h-1zM195 985h1v1h-1zM265 985h1v1h-1zM300 985h1v1h-1zM335 985h1v1h-1zM370 985h1v1h-1zM440 985h1v1h-1zM475 985h1v1h-1zM510 985h1v1h-1zM545 985h1v1h-1zM615 985h1v1h-1zM650 985h1v1h-1zM685 985h1v1h-1zM720 985h1v1h-1zM790 985h1v1h-1zM825 985h1v1h-1zM860 985h1v1h-1zM895 985h1v1h-1zM964 985h1v1h-1zM999 985h1v1h-1zM1034 985h1v1h-1zM1069 985h1v1h-1zM1139 985h1v1h-1zM1174 985h1v1h-1zM1209 985h1v1h-1zM1244 985h1v1h-1zM1314 985h1v1h-1zM1349 985h1v1h-1zM1384 985h1v1h-1zM1419 985h1v1h-1zM1489 985h1v1h-1zM1524 985h1v1h-1zM1559 985h1v1h-1zM1594 985h1v1h-1zM1664 985h1v1h-1zM1699 985h1v1h-1zM1734 985h1v1h-1zM1769 985h1v1h-1zM1664 985h1v1h-1zM1699 985h1v1h-1zM1734 985h1v1h-1zM230 58h1v1h-1zM230 63h1v1h-1zM230 67h1v1h-1zM230 72h1v1h-1zM230 77h1v1h-1zM230 81h1v1h-1zM230 86h1v1h-1zM230 91h1v1h-1zM230 95h1v1h-1zM230 100h1v1h-1zM230 105h1v1h-1zM230 109h1v1h-1zM230 114h1v1h-1zM230 119h1v1h-1zM230 123h1v1h-1zM230 128h1v1h-1zM230 133h1v1h-1zM230 137h1v1h-1zM230 142h1v1h-1zM230 147h1v1h-1zM230 152h1v1h-1zM230 156h1v1h-1zM230 161h1v1h-1zM230 166h1v1h-1zM230 170h1v1h-1zM230 175h1v1h-1zM230 180h1v1h-1zM230 184h1v1h-1zM230 189h1v1h-1zM230 194h1v1h-1zM230 198h1v1h-1zM230 203h1v1h-1zM230 208h1v1h-1zM230 212h1v1h-1zM230 217h1v1h-1zM230 222h1v1h-1zM230 226h1v1h-1zM230 231h1v1h-1zM230 236h1v1h-1zM230 240h1v1h-1zM230 245h1v1h-1zM230 250h1v1h-1zM230 254h1v1h-1zM230 259h1v1h-1zM230 264h1v1h-1zM230 268h1v1h-1zM230 273h1v1h-1zM230 278h1v1h-1zM230 282h1v1h-1zM230 287h1v1h-1zM230 292h1v1h-1zM230 296h1v1h-1zM230 301h1v1h-1zM230 306h1v1h-1zM230 310h1v1h-1zM230 315h1v1h-1zM230 320h1v1h-1zM230 324h1v1h-1zM230 329h1v1h-1zM230 334h1v1h-1zM230 339h1v1h-1zM230 343h1v1h-1zM230 348h1v1h-1zM230 353h1v1h-1zM230 357h1v1h-1zM230 362h1v1h-1zM230 367h1v1h-1zM230 371h1v1h-1zM230 376h1v1h-1zM230 381h1v1h-1zM230 385h1v1h-1zM230 390h1v1h-1zM230 395h1v1h-1zM230 399h1v1h-1zM230 404h1v1h-1zM230 409h1v1h-1zM230 413h1v1h-1zM230 418h1v1h-1zM230 423h1v1h-1zM230 427h1v1h-1zM230 432h1v1h-1zM230 437h1v1h-1zM230 441h1v1h-1zM230 446h1v1h-1zM230 451h1v1h-1zM230 455h1v1h-1zM230 460h1v1h-1zM230 465h1v1h-1zM230 469h1v1h-1zM230 474h1v1h-1zM230 479h1v1h-1zM230 483h1v1h-1zM230 488h1v1h-1zM230 493h1v1h-1zM230 497h1v1h-1zM230 502h1v1h-1zM230 507h1v1h-1zM230 511h1v1h-1zM230 516h1v1h-1zM230 521h1v1h-1zM230 526h1v1h-1zM230 530h1v1h-1zM230 535h1v1h-1zM230 540h1v1h-1zM230 544h1v1h-1zM230 549h1v1h-1zM230 554h1v1h-1zM230 558h1v1h-1zM230 563h1v1h-1zM230 568h1v1h-1zM230 572h1v1h-1zM230 577h1v1h-1zM230 582h1v1h-1zM230 586h1v1h-1zM230 591h1v1h-1zM230 596h1v1h-1zM230 600h1v1h-1zM230 605h1v1h-1zM230 610h1v1h-1zM230 614h1v1h-1zM230 619h1v1h-1zM230 624h1v1h-1zM230 628h1v1h-1zM230 633h1v1h-1zM230 638h1v1h-1zM230 642h1v1h-1zM230 647h1v1h-1zM230 652h1v1h-1zM230 656h1v1h-1zM230 661h1v1h-1zM230 666h1v1h-1zM230 670h1v1h-1zM230 675h1v1h-1zM230 680h1v1h-1zM230 684h1v1h-1zM230 689h1v1h-1zM230 694h1v1h-1zM230 698h1v1h-1zM230 703h1v1h-1zM230 708h1v1h-1zM230 712h1v1h-1zM230 717h1v1h-1zM230 722h1v1h-1zM230 727h1v1h-1zM230 731h1v1h-1zM230 736h1v1h-1zM230 741h1v1h-1zM230 745h1v1h-1zM230 750h1v1h-1zM230 755h1v1h-1zM230 759h1v1h-1zM230 764h1v1h-1zM230 769h1v1h-1zM230 773h1v1h-1zM230 778h1v1h-1zM230 783h1v1h-1zM230 787h1v1h-1zM230 792h1v1h-1zM230 797h1v1h-1zM230 801h1v1h-1zM230 806h1v1h-1zM230 811h1v1h-1zM230 815h1v1h-1zM230 820h1v1h-1zM230 825h1v1h-1zM230 829h1v1h-1zM230 834h1v1h-1zM230 839h1v1h-1zM230 843h1v1h-1zM230 848h1v1h-1zM230 853h1v1h-1zM230 857h1v1h-1zM230 862h1v1h-1zM230 867h1v1h-1zM230 871h1v1h-1zM230 876h1v1h-1zM230 881h1v1h-1zM230 885h1v1h-1zM230 890h1v1h-1zM230 895h1v1h-1zM230 899h1v1h-1zM230 904h1v1h-1zM230 909h1v1h-1zM230 914h1v1h-1zM230 918h1v1h-1zM230 923h1v1h-1zM230 928h1v1h-1zM230 932h1v1h-1zM230 937h1v1h-1zM230 942h1v1h-1zM230 946h1v1h-1zM230 951h1v1h-1zM230 956h1v1h-1zM230 960h1v1h-1zM230 965h1v1h-1zM230 970h1v1h-1zM230 974h1v1h-1zM230 979h1v1h-1zM230 984h1v1h-1zM230 988h1v1h-1zM230 993h1v1h-1zM405 58h1v1h-1zM405 63h1v1h-1zM405 67h1v1h-1zM405 72h1v1h-1zM405 77h1v1h-1zM405 81h1v1h-1zM405 86h1v1h-1zM405 91h1v1h-1zM405 95h1v1h-1zM405 100h1v1h-1zM405 105h1v1h-1zM405 109h1v1h-1zM405 114h1v1h-1zM405 119h1v1h-1zM405 123h1v1h-1zM405 128h1v1h-1zM405 133h1v1h-1zM405 137h1v1h-1zM405 142h1v1h-1zM405 147h1v1h-1zM405 152h1v1h-1zM405 156h1v1h-1zM405 161h1v1h-1zM405 166h1v1h-1zM405 170h1v1h-1zM405 175h1v1h-1zM405 180h1v1h-1zM405 184h1v1h-1zM405 189h1v1h-1zM405 194h1v1h-1zM405 198h1v1h-1zM405 203h1v1h-1zM405 208h1v1h-1zM405 212h1v1h-1zM405 217h1v1h-1zM405 222h1v1h-1zM405 226h1v1h-1zM405 231h1v1h-1zM405 236h1v1h-1zM405 240h1v1h-1zM405 245h1v1h-1zM405 250h1v1h-1zM405 254h1v1h-1zM405 259h1v1h-1zM405 264h1v1h-1zM405 268h1v1h-1zM405 273h1v1h-1zM405 278h1v1h-1zM405 282h1v1h-1zM405 287h1v1h-1zM405 292h1v1h-1zM405 296h1v1h-1zM405 301h1v1h-1zM405 306h1v1h-1zM405 310h1v1h-1zM405 315h1v1h-1zM405 320h1v1h-1zM405 324h1v1h-1zM405 329h1v1h-1zM405 334h1v1h-1zM405 339h1v1h-1zM405 343h1v1h-1zM405 348h1v1h-1zM405 353h1v1h-1zM405 357h1v1h-1zM405 362h1v1h-1zM405 367h1v1h-1zM405 371h1v1h-1zM405 376h1v1h-1zM405 381h1v1h-1zM405 385h1v1h-1zM405 390h1v1h-1zM405 395h1v1h-1zM405 399h1v1h-1zM405 404h1v1h-1zM405 409h1v1h-1zM405 413h1v1h-1zM405 418h1v1h-1zM405 423h1v1h-1zM405 427h1v1h-1zM405 432h1v1h-1zM405 437h1v1h-1zM405 441h1v1h-1zM405 446h1v1h-1zM405 451h1v1h-1zM405 455h1v1h-1zM405 460h1v1h-1zM405 465h1v1h-1zM405 469h1v1h-1zM405 474h1v1h-1zM405 479h1v1h-1zM405 483h1v1h-1zM405 488h1v1h-1zM405 493h1v1h-1zM405 497h1v1h-1zM405 502h1v1h-1zM405 507h1v1h-1zM405 511h1v1h-1zM405 516h1v1h-1zM405 521h1v1h-1zM405 526h1v1h-1zM405 530h1v1h-1zM405 535h1v1h-1zM405 540h1v1h-1zM405 544h1v1h-1zM405 549h1v1h-1zM405 554h1v1h-1zM405 558h1v1h-1zM405 563h1v1h-1zM405 568h1v1h-1zM405 572h1v1h-1zM405 577h1v1h-1zM405 582h1v1h-1zM405 586h1v1h-1zM405 591h1v1h-1zM405 596h1v1h-1zM405 600h1v1h-1zM405 605h1v1h-1zM405 610h1v1h-1zM405 614h1v1h-1zM405 619h1v1h-1zM405 624h1v1h-1zM405 628h1v1h-1zM405 633h1v1h-1zM405 638h1v1h-1zM405 642h1v1h-1zM405 647h1v1h-1zM405 652h1v1h-1zM405 656h1v1h-1zM405 661h1v1h-1zM405 666h1v1h-1zM405 670h1v1h-1zM405 675h1v1h-1zM405 680h1v1h-1zM405 684h1v1h-1zM405 689h1v1h-1zM405 694h1v1h-1zM405 698h1v1h-1zM405 703h1v1h-1zM405 708h1v1h-1zM405 712h1v1h-1zM405 717h1v1h-1zM405 722h1v1h-1zM405 727h1v1h-1zM405 731h1v1h-1zM405 736h1v1h-1zM405 741h1v1h-1zM405 745h1v1h-1zM405 750h1v1h-1zM405 755h1v1h-1zM405 759h1v1h-1zM405 764h1v1h-1zM405 769h1v1h-1zM405 773h1v1h-1zM405 778h1v1h-1zM405 783h1v1h-1zM405 787h1v1h-1zM405 792h1v1h-1zM405 797h1v1h-1zM405 801h1v1h-1zM405 806h1v1h-1zM405 811h1v1h-1zM405 815h1v1h-1zM405 820h1v1h-1zM405 825h1v1h-1zM405 829h1v1h-1zM405 834h1v1h-1zM405 839h1v1h-1zM405 843h1v1h-1zM405 848h1v1h-1zM405 853h1v1h-1zM405 857h1v1h-1zM405 862h1v1h-1zM405 867h1v1h-1zM405 871h1v1h-1zM405 876h1v1h-1zM405 881h1v1h-1zM405 885h1v1h-1zM405 890h1v1h-1zM405 895h1v1h-1zM405 899h1v1h-1zM405 904h1v1h-1zM405 909h1v1h-1zM405 914h1v1h-1zM405 918h1v1h-1zM405 923h1v1h-1zM405 928h1v1h-1zM405 932h1v1h-1zM405 937h1v1h-1zM405 942h1v1h-1zM405 946h1v1h-1zM405 951h1v1h-1zM405 956h1v1h-1zM405 960h1v1h-1zM405 965h1v1h-1zM405 970h1v1h-1zM405 974h1v1h-1zM405 979h1v1h-1zM405 984h1v1h-1zM405 988h1v1h-1zM405 993h1v1h-1zM580 58h1v1h-1zM580 63h1v1h-1zM580 67h1v1h-1zM580 72h1v1h-1zM580 77h1v1h-1zM580 81h1v1h-1zM580 86h1v1h-1zM580 91h1v1h-1zM580 95h1v1h-1zM580 100h1v1h-1zM580 105h1v1h-1zM580 109h1v1h-1zM580 114h1v1h-1zM580 119h1v1h-1zM580 123h1v1h-1zM580 128h1v1h-1zM580 133h1v1h-1zM580 137h1v1h-1zM580 142h1v1h-1zM580 147h1v1h-1zM580 152h1v1h-1zM580 156h1v1h-1zM580 161h1v1h-1zM580 166h1v1h-1zM580 170h1v1h-1zM580 175h1v1h-1zM580 180h1v1h-1zM580 184h1v1h-1zM580 189h1v1h-1zM580 194h1v1h-1zM580 198h1v1h-1zM580 203h1v1h-1zM580 208h1v1h-1zM580 212h1v1h-1zM580 217h1v1h-1zM580 222h1v1h-1zM580 226h1v1h-1zM580 231h1v1h-1zM580 236h1v1h-1zM580 240h1v1h-1zM580 245h1v1h-1zM580 250h1v1h-1zM580 254h1v1h-1zM580 259h1v1h-1zM580 264h1v1h-1zM580 268h1v1h-1zM580 273h1v1h-1zM580 278h1v1h-1zM580 282h1v1h-1zM580 287h1v1h-1zM580 292h1v1h-1zM580 296h1v1h-1zM580 301h1v1h-1zM580 306h1v1h-1zM580 310h1v1h-1zM580 315h1v1h-1zM580 320h1v1h-1zM580 324h1v1h-1zM580 329h1v1h-1zM580 334h1v1h-1zM580 339h1v1h-1zM580 343h1v1h-1zM580 348h1v1h-1zM580 353h1v1h-1zM580 357h1v1h-1zM580 362h1v1h-1zM580 367h1v1h-1zM580 371h1v1h-1zM580 376h1v1h-1zM580 381h1v1h-1zM580 385h1v1h-1zM580 390h1v1h-1zM580 395h1v1h-1zM580 399h1v1h-1zM580 404h1v1h-1zM580 409h1v1h-1zM580 413h1v1h-1zM580 418h1v1h-1zM580 423h1v1h-1zM580 427h1v1h-1zM580 432h1v1h-1zM580 437h1v1h-1zM580 441h1v1h-1zM580 446h1v1h-1zM580 451h1v1h-1zM580 455h1v1h-1zM580 460h1v1h-1zM580 465h1v1h-1zM580 469h1v1h-1zM580 474h1v1h-1zM580 479h1v1h-1zM580 483h1v1h-1zM580 488h1v1h-1zM580 493h1v1h-1zM580 497h1v1h-1zM580 502h1v1h-1zM580 507h1v1h-1zM580 511h1v1h-1zM580 516h1v1h-1zM580 521h1v1h-1zM580 526h1v1h-1zM580 530h1v1h-1zM580 535h1v1h-1zM580 540h1v1h-1zM580 544h1v1h-1zM580 549h1v1h-1zM580 554h1v1h-1zM580 558h1v1h-1zM580 563h1v1h-1zM580 568h1v1h-1zM580 572h1v1h-1zM580 577h1v1h-1zM580 582h1v1h-1zM580 586h1v1h-1zM580 591h1v1h-1zM580 596h1v1h-1zM580 600h1v1h-1zM580 605h1v1h-1zM580 610h1v1h-1zM580 614h1v1h-1zM580 619h1v1h-1zM580 624h1v1h-1zM580 628h1v1h-1zM580 633h1v1h-1zM580 638h1v1h-1zM580 642h1v1h-1zM580 647h1v1h-1zM580 652h1v1h-1zM580 656h1v1h-1zM580 661h1v1h-1zM580 666h1v1h-1zM580 670h1v1h-1zM580 675h1v1h-1zM580 680h1v1h-1zM580 684h1v1h-1zM580 689h1v1h-1zM580 694h1v1h-1zM580 698h1v1h-1zM580 703h1v1h-1zM580 708h1v1h-1zM580 712h1v1h-1zM580 717h1v1h-1zM580 722h1v1h-1zM580 727h1v1h-1zM580 731h1v1h-1zM580 736h1v1h-1zM580 741h1v1h-1zM580 745h1v1h-1zM580 750h1v1h-1zM580 755h1v1h-1zM580 759h1v1h-1zM580 764h1v1h-1zM580 769h1v1h-1zM580 773h1v1h-1zM580 778h1v1h-1zM580 783h1v1h-1zM580 787h1v1h-1zM580 792h1v1h-1zM580 797h1v1h-1zM580 801h1v1h-1zM580 806h1v1h-1zM580 811h1v1h-1zM580 815h1v1h-1zM580 820h1v1h-1zM580 825h1v1h-1zM580 829h1v1h-1zM580 834h1v1h-1zM580 839h1v1h-1zM580 843h1v1h-1zM580 848h1v1h-1zM580 853h1v1h-1zM580 857h1v1h-1zM580 862h1v1h-1zM580 867h1v1h-1zM580 871h1v1h-1zM580 876h1v1h-1zM580 881h1v1h-1zM580 885h1v1h-1zM580 890h1v1h-1zM580 895h1v1h-1zM580 899h1v1h-1zM580 904h1v1h-1zM580 909h1v1h-1zM580 914h1v1h-1zM580 918h1v1h-1zM580 923h1v1h-1zM580 928h1v1h-1zM580 932h1v1h-1zM580 937h1v1h-1zM580 942h1v1h-1zM580 946h1v1h-1zM580 951h1v1h-1zM580 956h1v1h-1zM580 960h1v1h-1zM580 965h1v1h-1zM580 970h1v1h-1zM580 974h1v1h-1zM580 979h1v1h-1zM580 984h1v1h-1zM580 988h1v1h-1zM580 993h1v1h-1zM755 58h1v1h-1zM755 63h1v1h-1zM755 67h1v1h-1zM755 72h1v1h-1zM755 77h1v1h-1zM755 81h1v1h-1zM755 86h1v1h-1zM755 91h1v1h-1zM755 95h1v1h-1zM755 100h1v1h-1zM755 105h1v1h-1zM755 109h1v1h-1zM755 114h1v1h-1zM755 119h1v1h-1zM755 123h1v1h-1zM755 128h1v1h-1zM755 133h1v1h-1zM755 137h1v1h-1zM755 142h1v1h-1zM755 147h1v1h-1zM755 152h1v1h-1zM755 156h1v1h-1zM755 161h1v1h-1zM755 166h1v1h-1zM755 170h1v1h-1zM755 175h1v1h-1zM755 180h1v1h-1zM755 184h1v1h-1zM755 189h1v1h-1zM755 194h1v1h-1zM755 198h1v1h-1zM755 203h1v1h-1zM755 208h1v1h-1zM755 212h1v1h-1zM755 217h1v1h-1zM755 222h1v1h-1zM755 226h1v1h-1zM755 231h1v1h-1zM755 236h1v1h-1zM755 240h1v1h-1zM755 245h1v1h-1zM755 250h1v1h-1zM755 254h1v1h-1zM755 259h1v1h-1zM755 264h1v1h-1zM755 268h1v1h-1zM755 273h1v1h-1zM755 278h1v1h-1zM755 282h1v1h-1zM755 287h1v1h-1zM755 292h1v1h-1zM755 296h1v1h-1zM755 301h1v1h-1zM755 306h1v1h-1zM755 310h1v1h-1zM755 315h1v1h-1zM755 320h1v1h-1zM755 324h1v1h-1zM755 329h1v1h-1zM755 334h1v1h-1zM755 339h1v1h-1zM755 343h1v1h-1zM755 348h1v1h-1zM755 353h1v1h-1zM755 357h1v1h-1zM755 362h1v1h-1zM755 367h1v1h-1zM755 371h1v1h-1zM755 376h1v1h-1zM755 381h1v1h-1zM755 385h1v1h-1zM755 390h1v1h-1zM755 395h1v1h-1zM755 399h1v1h-1zM755 404h1v1h-1zM755 409h1v1h-1zM755 413h1v1h-1zM755 418h1v1h-1zM755 423h1v1h-1zM755 427h1v1h-1zM755 432h1v1h-1zM755 437h1v1h-1zM755 441h1v1h-1zM755 446h1v1h-1zM755 451h1v1h-1zM755 455h1v1h-1zM755 460h1v1h-1zM755 465h1v1h-1zM755 469h1v1h-1zM755 474h1v1h-1zM755 479h1v1h-1zM755 483h1v1h-1zM755 488h1v1h-1zM755 493h1v1h-1zM755 497h1v1h-1zM755 502h1v1h-1zM755 507h1v1h-1zM755 511h1v1h-1zM755 516h1v1h-1zM755 521h1v1h-1zM755 526h1v1h-1zM755 530h1v1h-1zM755 535h1v1h-1zM755 540h1v1h-1zM755 544h1v1h-1zM755 549h1v1h-1zM755 554h1v1h-1zM755 558h1v1h-1zM755 563h1v1h-1zM755 568h1v1h-1zM755 572h1v1h-1zM755 577h1v1h-1zM755 582h1v1h-1zM755 586h1v1h-1zM755 591h1v1h-1zM755 596h1v1h-1zM755 600h1v1h-1zM755 605h1v1h-1zM755 610h1v1h-1zM755 614h1v1h-1zM755 619h1v1h-1zM755 624h1v1h-1zM755 628h1v1h-1zM755 633h1v1h-1zM755 638h1v1h-1zM755 642h1v1h-1zM755 647h1v1h-1zM755 652h1v1h-1zM755 656h1v1h-1zM755 661h1v1h-1zM755 666h1v1h-1zM755 670h1v1h-1zM755 675h1v1h-1zM755 680h1v1h-1zM755 684h1v1h-1zM755 689h1v1h-1zM755 694h1v1h-1zM755 698h1v1h-1zM755 703h1v1h-1zM755 708h1v1h-1zM755 712h1v1h-1zM755 717h1v1h-1zM755 722h1v1h-1zM755 727h1v1h-1zM755 731h1v1h-1zM755 736h1v1h-1zM755 741h1v1h-1zM755 745h1v1h-1zM755 750h1v1h-1zM755 755h1v1h-1zM755 759h1v1h-1zM755 764h1v1h-1zM755 769h1v1h-1zM755 773h1v1h-1zM755 778h1v1h-1zM755 783h1v1h-1zM755 787h1v1h-1zM755 792h1v1h-1zM755 797h1v1h-1zM755 801h1v1h-1zM755 806h1v1h-1zM755 811h1v1h-1zM755 815h1v1h-1zM755 820h1v1h-1zM755 825h1v1h-1zM755 829h1v1h-1zM755 834h1v1h-1zM755 839h1v1h-1zM755 843h1v1h-1zM755 848h1v1h-1zM755 853h1v1h-1zM755 857h1v1h-1zM755 862h1v1h-1zM755 867h1v1h-1zM755 871h1v1h-1zM755 876h1v1h-1zM755 881h1v1h-1zM755 885h1v1h-1zM755 890h1v1h-1zM755 895h1v1h-1zM755 899h1v1h-1zM755 904h1v1h-1zM755 909h1v1h-1zM755 914h1v1h-1zM755 918h1v1h-1zM755 923h1v1h-1zM755 928h1v1h-1zM755 932h1v1h-1zM755 937h1v1h-1zM755 942h1v1h-1zM755 946h1v1h-1zM755 951h1v1h-1zM755 956h1v1h-1zM755 960h1v1h-1zM755 965h1v1h-1zM755 970h1v1h-1zM755 974h1v1h-1zM755 979h1v1h-1zM755 984h1v1h-1zM755 988h1v1h-1zM755 993h1v1h-1zM929 58h1v1h-1zM929 63h1v1h-1zM929 67h1v1h-1zM929 72h1v1h-1zM929 77h1v1h-1zM929 81h1v1h-1zM929 86h1v1h-1zM929 91h1v1h-1zM929 95h1v1h-1zM929 100h1v1h-1zM929 105h1v1h-1zM929 109h1v1h-1zM929 114h1v1h-1zM929 119h1v1h-1zM929 123h1v1h-1zM929 128h1v1h-1zM929 133h1v1h-1zM929 137h1v1h-1zM929 142h1v1h-1zM929 147h1v1h-1zM929 152h1v1h-1zM929 156h1v1h-1zM929 161h1v1h-1zM929 166h1v1h-1zM929 170h1v1h-1zM929 175h1v1h-1zM929 180h1v1h-1zM929 184h1v1h-1zM929 189h1v1h-1zM929 194h1v1h-1zM929 198h1v1h-1zM929 203h1v1h-1zM929 208h1v1h-1zM929 212h1v1h-1zM929 217h1v1h-1zM929 222h1v1h-1zM929 226h1v1h-1zM929 231h1v1h-1zM929 236h1v1h-1zM929 240h1v1h-1zM929 245h1v1h-1zM929 250h1v1h-1zM929 254h1v1h-1zM929 259h1v1h-1zM929 264h1v1h-1zM929 268h1v1h-1zM929 273h1v1h-1zM929 278h1v1h-1zM929 282h1v1h-1zM929 287h1v1h-1zM929 292h1v1h-1zM929 296h1v1h-1zM929 301h1v1h-1zM929 306h1v1h-1zM929 310h1v1h-1zM929 315h1v1h-1zM929 320h1v1h-1zM929 324h1v1h-1zM929 329h1v1h-1zM929 334h1v1h-1zM929 339h1v1h-1zM929 343h1v1h-1zM929 348h1v1h-1zM929 353h1v1h-1zM929 357h1v1h-1zM929 362h1v1h-1zM929 367h1v1h-1zM929 371h1v1h-1zM929 376h1v1h-1zM929 381h1v1h-1zM929 385h1v1h-1zM929 390h1v1h-1zM929 395h1v1h-1zM929 399h1v1h-1zM929 404h1v1h-1zM929 409h1v1h-1zM929 413h1v1h-1zM929 418h1v1h-1zM929 423h1v1h-1zM929 427h1v1h-1zM929 432h1v1h-1zM929 437h1v1h-1zM929 441h1v1h-1zM929 446h1v1h-1zM929 451h1v1h-1zM929 455h1v1h-1zM929 460h1v1h-1zM929 465h1v1h-1zM929 469h1v1h-1zM929 474h1v1h-1zM929 479h1v1h-1zM929 483h1v1h-1zM929 488h1v1h-1zM929 493h1v1h-1zM929 497h1v1h-1zM929 502h1v1h-1zM929 507h1v1h-1zM929 511h1v1h-1zM929 516h1v1h-1zM929 521h1v1h-1zM929 526h1v1h-1zM929 530h1v1h-1zM929 535h1v1h-1zM929 540h1v1h-1zM929 544h1v1h-1zM929 549h1v1h-1zM929 554h1v1h-1zM929 558h1v1h-1zM929 563h1v1h-1zM929 568h1v1h-1zM929 572h1v1h-1zM929 577h1v1h-1zM929 582h1v1h-1zM929 586h1v1h-1zM929 591h1v1h-1zM929 596h1v1h-1zM929 600h1v1h-1zM929 605h1v1h-1zM929 610h1v1h-1zM929 614h1v1h-1zM929 619h1v1h-1zM929 624h1v1h-1zM929 628h1v1h-1zM929 633h1v1h-1zM929 638h1v1h-1zM929 642h1v1h-1zM929 647h1v1h-1zM929 652h1v1h-1zM929 656h1v1h-1zM929 661h1v1h-1zM929 666h1v1h-1zM929 670h1v1h-1zM929 675h1v1h-1zM929 680h1v1h-1zM929 684h1v1h-1zM929 689h1v1h-1zM929 694h1v1h-1zM929 698h1v1h-1zM929 703h1v1h-1zM929 708h1v1h-1zM929 712h1v1h-1zM929 717h1v1h-1zM929 722h1v1h-1zM929 727h1v1h-1zM929 731h1v1h-1zM929 736h1v1h-1zM929 741h1v1h-1zM929 745h1v1h-1zM929 750h1v1h-1zM929 755h1v1h-1zM929 759h1v1h-1zM929 764h1v1h-1zM929 769h1v1h-1zM929 773h1v1h-1zM929 778h1v1h-1zM929 783h1v1h-1zM929 787h1v1h-1zM929 792h1v1h-1zM929 797h1v1h-1zM929 801h1v1h-1zM929 806h1v1h-1zM929 811h1v1h-1zM929 815h1v1h-1zM929 820h1v1h-1zM929 825h1v1h-1zM929 829h1v1h-1zM929 834h1v1h-1zM929 839h1v1h-1zM929 843h1v1h-1zM929 848h1v1h-1zM929 853h1v1h-1zM929 857h1v1h-1zM929 862h1v1h-1zM929 867h1v1h-1zM929 871h1v1h-1zM929 876h1v1h-1zM929 881h1v1h-1zM929 885h1v1h-1zM929 890h1v1h-1zM929 895h1v1h-1zM929 899h1v1h-1zM929 904h1v1h-1zM929 909h1v1h-1zM929 914h1v1h-1zM929 918h1v1h-1zM929 923h1v1h-1zM929 928h1v1h-1zM929 932h1v1h-1zM929 937h1v1h-1zM929 942h1v1h-1zM929 946h1v1h-1zM929 951h1v1h-1zM929 956h1v1h-1zM929 960h1v1h-1zM929 965h1v1h-1zM929 970h1v1h-1zM929 974h1v1h-1zM929 979h1v1h-1zM929 984h1v1h-1zM929 988h1v1h-1zM929 993h1v1h-1zM1104 58h1v1h-1zM1104 63h1v1h-1zM1104 67h1v1h-1zM1104 72h1v1h-1zM1104 77h1v1h-1zM1104 81h1v1h-1zM1104 86h1v1h-1zM1104 91h1v1h-1zM1104 95h1v1h-1zM1104 100h1v1h-1zM1104 105h1v1h-1zM1104 109h1v1h-1zM1104 114h1v1h-1zM1104 119h1v1h-1zM1104 123h1v1h-1zM1104 128h1v1h-1zM1104 133h1v1h-1zM1104 137h1v1h-1zM1104 142h1v1h-1zM1104 147h1v1h-1zM1104 152h1v1h-1zM1104 156h1v1h-1zM1104 161h1v1h-1zM1104 166h1v1h-1zM1104 170h1v1h-1zM1104 175h1v1h-1zM1104 180h1v1h-1zM1104 184h1v1h-1zM1104 189h1v1h-1zM1104 194h1v1h-1zM1104 198h1v1h-1zM1104 203h1v1h-1zM1104 208h1v1h-1zM1104 212h1v1h-1zM1104 217h1v1h-1zM1104 222h1v1h-1zM1104 226h1v1h-1zM1104 231h1v1h-1zM1104 236h1v1h-1zM1104 240h1v1h-1zM1104 245h1v1h-1zM1104 250h1v1h-1zM1104 254h1v1h-1zM1104 259h1v1h-1zM1104 264h1v1h-1zM1104 268h1v1h-1zM1104 273h1v1h-1zM1104 278h1v1h-1zM1104 282h1v1h-1zM1104 287h1v1h-1zM1104 292h1v1h-1zM1104 296h1v1h-1zM1104 301h1v1h-1zM1104 306h1v1h-1zM1104 310h1v1h-1zM1104 315h1v1h-1zM1104 320h1v1h-1zM1104 324h1v1h-1zM1104 329h1v1h-1zM1104 334h1v1h-1zM1104 339h1v1h-1zM1104 343h1v1h-1zM1104 348h1v1h-1zM1104 353h1v1h-1zM1104 357h1v1h-1zM1104 362h1v1h-1zM1104 367h1v1h-1zM1104 371h1v1h-1zM1104 376h1v1h-1zM1104 381h1v1h-1zM1104 385h1v1h-1zM1104 390h1v1h-1zM1104 395h1v1h-1zM1104 399h1v1h-1zM1104 404h1v1h-1zM1104 409h1v1h-1zM1104 413h1v1h-1zM1104 418h1v1h-1zM1104 423h1v1h-1zM1104 427h1v1h-1zM1104 432h1v1h-1zM1104 437h1v1h-1zM1104 441h1v1h-1zM1104 446h1v1h-1zM1104 451h1v1h-1zM1104 455h1v1h-1zM1104 460h1v1h-1zM1104 465h1v1h-1zM1104 469h1v1h-1zM1104 474h1v1h-1zM1104 479h1v1h-1zM1104 483h1v1h-1zM1104 488h1v1h-1zM1104 493h1v1h-1zM1104 497h1v1h-1zM1104 502h1v1h-1zM1104 507h1v1h-1zM1104 511h1v1h-1zM1104 516h1v1h-1zM1104 521h1v1h-1zM1104 526h1v1h-1zM1104 530h1v1h-1zM1104 535h1v1h-1zM1104 540h1v1h-1zM1104 544h1v1h-1zM1104 549h1v1h-1zM1104 554h1v1h-1zM1104 558h1v1h-1zM1104 563h1v1h-1zM1104 568h1v1h-1zM1104 572h1v1h-1zM1104 577h1v1h-1zM1104 582h1v1h-1zM1104 586h1v1h-1zM1104 591h1v1h-1zM1104 596h1v1h-1zM1104 600h1v1h-1zM1104 605h1v1h-1zM1104 610h1v1h-1zM1104 614h1v1h-1zM1104 619h1v1h-1zM1104 624h1v1h-1zM1104 628h1v1h-1zM1104 633h1v1h-1zM1104 638h1v1h-1zM1104 642h1v1h-1zM1104 647h1v1h-1zM1104 652h1v1h-1zM1104 656h1v1h-1zM1104 661h1v1h-1zM1104 666h1v1h-1zM1104 670h1v1h-1zM1104 675h1v1h-1zM1104 680h1v1h-1zM1104 684h1v1h-1zM1104 689h1v1h-1zM1104 694h1v1h-1zM1104 698h1v1h-1zM1104 703h1v1h-1zM1104 708h1v1h-1zM1104 712h1v1h-1zM1104 717h1v1h-1zM1104 722h1v1h-1zM1104 727h1v1h-1zM1104 731h1v1h-1zM1104 736h1v1h-1zM1104 741h1v1h-1zM1104 745h1v1h-1zM1104 750h1v1h-1zM1104 755h1v1h-1zM1104 759h1v1h-1zM1104 764h1v1h-1zM1104 769h1v1h-1zM1104 773h1v1h-1zM1104 778h1v1h-1zM1104 783h1v1h-1zM1104 787h1v1h-1zM1104 792h1v1h-1zM1104 797h1v1h-1zM1104 801h1v1h-1zM1104 806h1v1h-1zM1104 811h1v1h-1zM1104 815h1v1h-1zM1104 820h1v1h-1zM1104 825h1v1h-1zM1104 829h1v1h-1zM1104 834h1v1h-1zM1104 839h1v1h-1zM1104 843h1v1h-1zM1104 848h1v1h-1zM1104 853h1v1h-1zM1104 857h1v1h-1zM1104 862h1v1h-1zM1104 867h1v1h-1zM1104 871h1v1h-1zM1104 876h1v1h-1zM1104 881h1v1h-1zM1104 885h1v1h-1zM1104 890h1v1h-1zM1104 895h1v1h-1zM1104 899h1v1h-1zM1104 904h1v1h-1zM1104 909h1v1h-1zM1104 914h1v1h-1zM1104 918h1v1h-1zM1104 923h1v1h-1zM1104 928h1v1h-1zM1104 932h1v1h-1zM1104 937h1v1h-1zM1104 942h1v1h-1zM1104 946h1v1h-1zM1104 951h1v1h-1zM1104 956h1v1h-1zM1104 960h1v1h-1zM1104 965h1v1h-1zM1104 970h1v1h-1zM1104 974h1v1h-1zM1104 979h1v1h-1zM1104 984h1v1h-1zM1104 988h1v1h-1zM1104 993h1v1h-1zM1279 58h1v1h-1zM1279 63h1v1h-1zM1279 67h1v1h-1zM1279 72h1v1h-1zM1279 77h1v1h-1zM1279 81h1v1h-1zM1279 86h1v1h-1zM1279 91h1v1h-1zM1279 95h1v1h-1zM1279 100h1v1h-1zM1279 105h1v1h-1zM1279 109h1v1h-1zM1279 114h1v1h-1zM1279 119h1v1h-1zM1279 123h1v1h-1zM1279 128h1v1h-1zM1279 133h1v1h-1zM1279 137h1v1h-1zM1279 142h1v1h-1zM1279 147h1v1h-1zM1279 152h1v1h-1zM1279 156h1v1h-1zM1279 161h1v1h-1zM1279 166h1v1h-1zM1279 170h1v1h-1zM1279 175h1v1h-1zM1279 180h1v1h-1zM1279 184h1v1h-1zM1279 189h1v1h-1zM1279 194h1v1h-1zM1279 198h1v1h-1zM1279 203h1v1h-1zM1279 208h1v1h-1zM1279 212h1v1h-1zM1279 217h1v1h-1zM1279 222h1v1h-1zM1279 226h1v1h-1zM1279 231h1v1h-1zM1279 236h1v1h-1zM1279 240h1v1h-1zM1279 245h1v1h-1zM1279 250h1v1h-1zM1279 254h1v1h-1zM1279 259h1v1h-1zM1279 264h1v1h-1zM1279 268h1v1h-1zM1279 273h1v1h-1zM1279 278h1v1h-1zM1279 282h1v1h-1zM1279 287h1v1h-1zM1279 292h1v1h-1zM1279 296h1v1h-1zM1279 301h1v1h-1zM1279 306h1v1h-1zM1279 310h1v1h-1zM1279 315h1v1h-1zM1279 320h1v1h-1zM1279 324h1v1h-1zM1279 329h1v1h-1zM1279 334h1v1h-1zM1279 339h1v1h-1zM1279 343h1v1h-1zM1279 348h1v1h-1zM1279 353h1v1h-1zM1279 357h1v1h-1zM1279 362h1v1h-1zM1279 367h1v1h-1zM1279 371h1v1h-1zM1279 376h1v1h-1zM1279 381h1v1h-1zM1279 385h1v1h-1zM1279 390h1v1h-1zM1279 395h1v1h-1zM1279 399h1v1h-1zM1279 404h1v1h-1zM1279 409h1v1h-1zM1279 413h1v1h-1zM1279 418h1v1h-1zM1279 423h1v1h-1zM1279 427h1v1h-1zM1279 432h1v1h-1zM1279 437h1v1h-1zM1279 441h1v1h-1zM1279 446h1v1h-1zM1279 451h1v1h-1zM1279 455h1v1h-1zM1279 460h1v1h-1zM1279 465h1v1h-1zM1279 469h1v1h-1zM1279 474h1v1h-1zM1279 479h1v1h-1zM1279 483h1v1h-1zM1279 488h1v1h-1zM1279 493h1v1h-1zM1279 497h1v1h-1zM1279 502h1v1h-1zM1279 507h1v1h-1zM1279 511h1v1h-1zM1279 516h1v1h-1zM1279 521h1v1h-1zM1279 526h1v1h-1zM1279 530h1v1h-1zM1279 535h1v1h-1zM1279 540h1v1h-1zM1279 544h1v1h-1zM1279 549h1v1h-1zM1279 554h1v1h-1zM1279 558h1v1h-1zM1279 563h1v1h-1zM1279 568h1v1h-1zM1279 572h1v1h-1zM1279 577h1v1h-1zM1279 582h1v1h-1zM1279 586h1v1h-1zM1279 591h1v1h-1zM1279 596h1v1h-1zM1279 600h1v1h-1zM1279 605h1v1h-1zM1279 610h1v1h-1zM1279 614h1v1h-1zM1279 619h1v1h-1zM1279 624h1v1h-1zM1279 628h1v1h-1zM1279 633h1v1h-1zM1279 638h1v1h-1zM1279 642h1v1h-1zM1279 647h1v1h-1zM1279 652h1v1h-1zM1279 656h1v1h-1zM1279 661h1v1h-1zM1279 666h1v1h-1zM1279 670h1v1h-1zM1279 675h1v1h-1zM1279 680h1v1h-1zM1279 684h1v1h-1zM1279 689h1v1h-1zM1279 694h1v1h-1zM1279 698h1v1h-1zM1279 703h1v1h-1zM1279 708h1v1h-1zM1279 712h1v1h-1zM1279 717h1v1h-1zM1279 722h1v1h-1zM1279 727h1v1h-1zM1279 731h1v1h-1zM1279 736h1v1h-1zM1279 741h1v1h-1zM1279 745h1v1h-1zM1279 750h1v1h-1zM1279 755h1v1h-1zM1279 759h1v1h-1zM1279 764h1v1h-1zM1279 769h1v1h-1zM1279 773h1v1h-1zM1279 778h1v1h-1zM1279 783h1v1h-1zM1279 787h1v1h-1zM1279 792h1v1h-1zM1279 797h1v1h-1zM1279 801h1v1h-1zM1279 806h1v1h-1zM1279 811h1v1h-1zM1279 815h1v1h-1zM1279 820h1v1h-1zM1279 825h1v1h-1zM1279 829h1v1h-1zM1279 834h1v1h-1zM1279 839h1v1h-1zM1279 843h1v1h-1zM1279 848h1v1h-1zM1279 853h1v1h-1zM1279 857h1v1h-1zM1279 862h1v1h-1zM1279 867h1v1h-1zM1279 871h1v1h-1zM1279 876h1v1h-1zM1279 881h1v1h-1zM1279 885h1v1h-1zM1279 890h1v1h-1zM1279 895h1v1h-1zM1279 899h1v1h-1zM1279 904h1v1h-1zM1279 909h1v1h-1zM1279 914h1v1h-1zM1279 918h1v1h-1zM1279 923h1v1h-1zM1279 928h1v1h-1zM1279 932h1v1h-1zM1279 937h1v1h-1zM1279 942h1v1h-1zM1279 946h1v1h-1zM1279 951h1v1h-1zM1279 956h1v1h-1zM1279 960h1v1h-1zM1279 965h1v1h-1zM1279 970h1v1h-1zM1279 974h1v1h-1zM1279 979h1v1h-1zM1279 984h1v1h-1zM1279 988h1v1h-1zM1279 993h1v1h-1zM1454 58h1v1h-1zM1454 63h1v1h-1zM1454 67h1v1h-1zM1454 72h1v1h-1zM1454 77h1v1h-1zM1454 81h1v1h-1zM1454 86h1v1h-1zM1454 91h1v1h-1zM1454 95h1v1h-1zM1454 100h1v1h-1zM1454 105h1v1h-1zM1454 109h1v1h-1zM1454 114h1v1h-1zM1454 119h1v1h-1zM1454 123h1v1h-1zM1454 128h1v1h-1zM1454 133h1v1h-1zM1454 137h1v1h-1zM1454 142h1v1h-1zM1454 147h1v1h-1zM1454 152h1v1h-1zM1454 156h1v1h-1zM1454 161h1v1h-1zM1454 166h1v1h-1zM1454 170h1v1h-1zM1454 175h1v1h-1zM1454 180h1v1h-1zM1454 184h1v1h-1zM1454 189h1v1h-1zM1454 194h1v1h-1zM1454 198h1v1h-1zM1454 203h1v1h-1zM1454 208h1v1h-1zM1454 212h1v1h-1zM1454 217h1v1h-1zM1454 222h1v1h-1zM1454 226h1v1h-1zM1454 231h1v1h-1zM1454 236h1v1h-1zM1454 240h1v1h-1zM1454 245h1v1h-1zM1454 250h1v1h-1zM1454 254h1v1h-1zM1454 259h1v1h-1zM1454 264h1v1h-1zM1454 268h1v1h-1zM1454 273h1v1h-1zM1454 278h1v1h-1zM1454 282h1v1h-1zM1454 287h1v1h-1zM1454 292h1v1h-1zM1454 296h1v1h-1zM1454 301h1v1h-1zM1454 306h1v1h-1zM1454 310h1v1h-1zM1454 315h1v1h-1zM1454 320h1v1h-1zM1454 324h1v1h-1zM1454 329h1v1h-1zM1454 334h1v1h-1zM1454 339h1v1h-1zM1454 343h1v1h-1zM1454 348h1v1h-1zM1454 353h1v1h-1zM1454 357h1v1h-1zM1454 362h1v1h-1zM1454 367h1v1h-1zM1454 371h1v1h-1zM1454 376h1v1h-1zM1454 381h1v1h-1zM1454 385h1v1h-1zM1454 390h1v1h-1zM1454 395h1v1h-1zM1454 399h1v1h-1zM1454 404h1v1h-1zM1454 409h1v1h-1zM1454 413h1v1h-1zM1454 418h1v1h-1zM1454 423h1v1h-1zM1454 427h1v1h-1zM1454 432h1v1h-1zM1454 437h1v1h-1zM1454 441h1v1h-1zM1454 446h1v1h-1zM1454 451h1v1h-1zM1454 455h1v1h-1zM1454 460h1v1h-1zM1454 465h1v1h-1zM1454 469h1v1h-1zM1454 474h1v1h-1zM1454 479h1v1h-1zM1454 483h1v1h-1zM1454 488h1v1h-1zM1454 493h1v1h-1zM1454 497h1v1h-1zM1454 502h1v1h-1zM1454 507h1v1h-1zM1454 511h1v1h-1zM1454 516h1v1h-1zM1454 521h1v1h-1zM1454 526h1v1h-1zM1454 530h1v1h-1zM1454 535h1v1h-1zM1454 540h1v1h-1zM1454 544h1v1h-1zM1454 549h1v1h-1zM1454 554h1v1h-1zM1454 558h1v1h-1zM1454 563h1v1h-1zM1454 568h1v1h-1zM1454 572h1v1h-1zM1454 577h1v1h-1zM1454 582h1v1h-1zM1454 586h1v1h-1zM1454 591h1v1h-1zM1454 596h1v1h-1zM1454 600h1v1h-1zM1454 605h1v1h-1zM1454 610h1v1h-1zM1454 614h1v1h-1zM1454 619h1v1h-1zM1454 624h1v1h-1zM1454 628h1v1h-1zM1454 633h1v1h-1zM1454 638h1v1h-1zM1454 642h1v1h-1zM1454 647h1v1h-1zM1454 652h1v1h-1zM1454 656h1v1h-1zM1454 661h1v1h-1zM1454 666h1v1h-1zM1454 670h1v1h-1zM1454 675h1v1h-1zM1454 680h1v1h-1zM1454 684h1v1h-1zM1454 689h1v1h-1zM1454 694h1v1h-1zM1454 698h1v1h-1zM1454 703h1v1h-1zM1454 708h1v1h-1zM1454 712h1v1h-1zM1454 717h1v1h-1zM1454 722h1v1h-1zM1454 727h1v1h-1zM1454 731h1v1h-1zM1454 736h1v1h-1zM1454 741h1v1h-1zM1454 745h1v1h-1zM1454 750h1v1h-1zM1454 755h1v1h-1zM1454 759h1v1h-1zM1454 764h1v1h-1zM1454 769h1v1h-1zM1454 773h1v1h-1zM1454 778h1v1h-1zM1454 783h1v1h-1zM1454 787h1v1h-1zM1454 792h1v1h-1zM1454 797h1v1h-1zM1454 801h1v1h-1zM1454 806h1v1h-1zM1454 811h1v1h-1zM1454 815h1v1h-1zM1454 820h1v1h-1zM1454 825h1v1h-1zM1454 829h1v1h-1zM1454 834h1v1h-1zM1454 839h1v1h-1zM1454 843h1v1h-1zM1454 848h1v1h-1zM1454 853h1v1h-1zM1454 857h1v1h-1zM1454 862h1v1h-1zM1454 867h1v1h-1zM1454 871h1v1h-1zM1454 876h1v1h-1zM1454 881h1v1h-1zM1454 885h1v1h-1zM1454 890h1v1h-1zM1454 895h1v1h-1zM1454 899h1v1h-1zM1454 904h1v1h-1zM1454 909h1v1h-1zM1454 914h1v1h-1zM1454 918h1v1h-1zM1454 923h1v1h-1zM1454 928h1v1h-1zM1454 932h1v1h-1zM1454 937h1v1h-1zM1454 942h1v1h-1zM1454 946h1v1h-1zM1454 951h1v1h-1zM1454 956h1v1h-1zM1454 960h1v1h-1zM1454 965h1v1h-1zM1454 970h1v1h-1zM1454 974h1v1h-1zM1454 979h1v1h-1zM1454 984h1v1h-1zM1454 988h1v1h-1zM1454 993h1v1h-1zM1629 58h1v1h-1zM1629 63h1v1h-1zM1629 67h1v1h-1zM1629 72h1v1h-1zM1629 77h1v1h-1zM1629 81h1v1h-1zM1629 86h1v1h-1zM1629 91h1v1h-1zM1629 95h1v1h-1zM1629 100h1v1h-1zM1629 105h1v1h-1zM1629 109h1v1h-1zM1629 114h1v1h-1zM1629 119h1v1h-1zM1629 123h1v1h-1zM1629 128h1v1h-1zM1629 133h1v1h-1zM1629 137h1v1h-1zM1629 142h1v1h-1zM1629 147h1v1h-1zM1629 152h1v1h-1zM1629 156h1v1h-1zM1629 161h1v1h-1zM1629 166h1v1h-1zM1629 170h1v1h-1zM1629 175h1v1h-1zM1629 180h1v1h-1zM1629 184h1v1h-1zM1629 189h1v1h-1zM1629 194h1v1h-1zM1629 198h1v1h-1zM1629 203h1v1h-1zM1629 208h1v1h-1zM1629 212h1v1h-1zM1629 217h1v1h-1zM1629 222h1v1h-1zM1629 226h1v1h-1zM1629 231h1v1h-1zM1629 236h1v1h-1zM1629 240h1v1h-1zM1629 245h1v1h-1zM1629 250h1v1h-1zM1629 254h1v1h-1zM1629 259h1v1h-1zM1629 264h1v1h-1zM1629 268h1v1h-1zM1629 273h1v1h-1zM1629 278h1v1h-1zM1629 282h1v1h-1zM1629 287h1v1h-1zM1629 292h1v1h-1zM1629 296h1v1h-1zM1629 301h1v1h-1zM1629 306h1v1h-1zM1629 310h1v1h-1zM1629 315h1v1h-1zM1629 320h1v1h-1zM1629 324h1v1h-1zM1629 329h1v1h-1zM1629 334h1v1h-1zM1629 339h1v1h-1zM1629 343h1v1h-1zM1629 348h1v1h-1zM1629 353h1v1h-1zM1629 357h1v1h-1zM1629 362h1v1h-1zM1629 367h1v1h-1zM1629 371h1v1h-1zM1629 376h1v1h-1zM1629 381h1v1h-1zM1629 385h1v1h-1zM1629 390h1v1h-1zM1629 395h1v1h-1zM1629 399h1v1h-1zM1629 404h1v1h-1zM1629 409h1v1h-1zM1629 413h1v1h-1zM1629 418h1v1h-1zM1629 423h1v1h-1zM1629 427h1v1h-1zM1629 432h1v1h-1zM1629 437h1v1h-1zM1629 441h1v1h-1zM1629 446h1v1h-1zM1629 451h1v1h-1zM1629 455h1v1h-1zM1629 460h1v1h-1zM1629 465h1v1h-1zM1629 469h1v1h-1zM1629 474h1v1h-1zM1629 479h1v1h-1zM1629 483h1v1h-1zM1629 488h1v1h-1zM1629 493h1v1h-1zM1629 497h1v1h-1zM1629 502h1v1h-1zM1629 507h1v1h-1zM1629 511h1v1h-1zM1629 516h1v1h-1zM1629 521h1v1h-1zM1629 526h1v1h-1zM1629 530h1v1h-1zM1629 535h1v1h-1zM1629 540h1v1h-1zM1629 544h1v1h-1zM1629 549h1v1h-1zM1629 554h1v1h-1zM1629 558h1v1h-1zM1629 563h1v1h-1zM1629 568h1v1h-1zM1629 572h1v1h-1zM1629 577h1v1h-1zM1629 582h1v1h-1zM1629 586h1v1h-1zM1629 591h1v1h-1zM1629 596h1v1h-1zM1629 600h1v1h-1zM1629 605h1v1h-1zM1629 610h1v1h-1zM1629 614h1v1h-1zM1629 619h1v1h-1zM1629 624h1v1h-1zM1629 628h1v1h-1zM1629 633h1v1h-1zM1629 638h1v1h-1zM1629 642h1v1h-1zM1629 647h1v1h-1zM1629 652h1v1h-1zM1629 656h1v1h-1zM1629 661h1v1h-1zM1629 666h1v1h-1zM1629 670h1v1h-1zM1629 675h1v1h-1zM1629 680h1v1h-1zM1629 684h1v1h-1zM1629 689h1v1h-1zM1629 694h1v1h-1zM1629 698h1v1h-1zM1629 703h1v1h-1zM1629 708h1v1h-1zM1629 712h1v1h-1zM1629 717h1v1h-1zM1629 722h1v1h-1zM1629 727h1v1h-1zM1629 731h1v1h-1zM1629 736h1v1h-1zM1629 741h1v1h-1zM1629 745h1v1h-1zM1629 750h1v1h-1zM1629 755h1v1h-1zM1629 759h1v1h-1zM1629 764h1v1h-1zM1629 769h1v1h-1zM1629 773h1v1h-1zM1629 778h1v1h-1zM1629 783h1v1h-1zM1629 787h1v1h-1zM1629 792h1v1h-1zM1629 797h1v1h-1zM1629 801h1v1h-1zM1629 806h1v1h-1zM1629 811h1v1h-1zM1629 815h1v1h-1zM1629 820h1v1h-1zM1629 825h1v1h-1zM1629 829h1v1h-1zM1629 834h1v1h-1zM1629 839h1v1h-1zM1629 843h1v1h-1zM1629 848h1v1h-1zM1629 853h1v1h-1zM1629 857h1v1h-1zM1629 862h1v1h-1zM1629 867h1v1h-1zM1629 871h1v1h-1zM1629 876h1v1h-1zM1629 881h1v1h-1zM1629 885h1v1h-1zM1629 890h1v1h-1zM1629 895h1v1h-1zM1629 899h1v1h-1zM1629 904h1v1h-1zM1629 909h1v1h-1zM1629 914h1v1h-1zM1629 918h1v1h-1zM1629 923h1v1h-1zM1629 928h1v1h-1zM1629 932h1v1h-1zM1629 937h1v1h-1zM1629 942h1v1h-1zM1629 946h1v1h-1zM1629 951h1v1h-1zM1629 956h1v1h-1zM1629 960h1v1h-1zM1629 965h1v1h-1zM1629 970h1v1h-1zM1629 974h1v1h-1zM1629 979h1v1h-1zM1629 984h1v1h-1zM1629 988h1v1h-1zM1629 993h1v1h-1z" fill="#b8b8b8"/><line x1="3" y1="267.5" x2="1751" y2="267.5" stroke="#c8c8c8" stroke-width="1" stroke-dasharray="5 5"/><line x1="3" y1="431.5" x2="1751" y2="431.5" stroke="#c8c8c8" stroke-width="1" stroke-dasharray="5 5"/><line x1="3" y1="735.5" x2="1751" y2="735.5" stroke="#c8c8c8" stroke-width="1" stroke-dasharray="5 5"/><line x1="3" y1="962.5" x2="1751" y2="962.5" stroke="#c8c8c8" stroke-width="1" stroke-dasharray="5 5"/><line x1="55.5" y1="99" x2="55.5" y2="993" stroke="#c8c8c8" stroke-width="1" stroke-dasharray="5 5"/></svg><svg class="a" style="left:0;top:0" width="1754" height="996" viewBox="0 0 1754 996"><defs><clipPath id="pc"><rect x="3" y="58" width="1748" height="935"/></clipPath></defs><g clip-path="url(#pc)"><polyline points="3.0,429.0 6.0,429.0 9.1,429.0 12.1,429.0 15.2,429.0 18.2,429.0 21.3,429.0 24.3,429.0 27.4,429.0 30.4,429.0 33.5,429.0 36.5,429.0 39.6,429.0 42.6,429.0 45.7,429.0 48.7,429.0 51.7,429.0 54.8,429.0 57.8,429.0 60.9,429.0 63.9,429.0 67.0,429.0 70.0,429.0 73.1,429.0 76.1,429.0 79.2,429.0 82.2,429.0 85.3,429.0 88.3,429.0 91.3,429.0 94.4,429.0 97.4,429.0 100.5,429.0 103.5,429.0 106.6,429.0 109.6,429.0 112.7,429.0 115.7,429.0 118.8,429.0 121.8,429.0 124.9,429.0 127.9,429.0 131.0,429.0 134.0,429.0 137.0,429.0 140.1,429.0 143.1,429.0 146.2,429.0 149.2,429.0 152.3,429.0 155.3,429.0 158.4,429.0 161.4,429.0 164.5,429.0 167.5,429.0 170.6,429.0 173.6,429.0 176.7,429.0 179.7,429.0 182.8,427.6 185.9,426.3 189.1,424.9 192.2,423.6 195.3,422.2 198.4,420.8 201.6,419.5 204.7,418.1 207.8,416.7 210.9,415.4 214.1,414.0 217.2,412.6 220.3,411.3 223.4,409.9 226.6,408.6 229.7,407.2 233.6,406.4 237.5,405.6 240.6,405.6 243.7,405.6 246.8,405.6 249.8,405.6 252.9,405.6 256.0,405.6 259.1,405.9 262.3,406.1 265.4,406.4 268.6,406.7 271.7,407.0 274.9,407.2 278.0,407.5 281.1,407.8 284.3,408.0 287.4,408.3 290.6,408.6 293.7,408.9 296.9,409.1 300.0,409.4 303.1,409.5 306.3,409.6 309.4,409.7 312.5,409.8 315.6,409.9 318.8,410.0 321.9,410.1 325.0,410.2 328.1,410.3 331.3,410.4 334.4,410.5 337.5,410.6 340.6,410.7 343.8,410.8 346.9,410.9 350.0,411.0 353.1,411.1 356.3,411.2 359.4,411.2 362.5,411.5 365.6,411.7 368.8,411.9 371.9,412.1 375.0,412.3 378.1,412.6 381.3,412.8 384.4,413.0 387.5,413.0 390.6,413.0 393.7,413.0 396.9,413.0 400.0,413.0 403.1,413.0 406.2,413.0 409.3,413.0 412.4,413.0 415.5,413.0 418.7,413.0 421.8,413.0 424.9,413.0 428.0,413.0 431.1,412.7 434.2,412.3 437.4,412.0 440.5,411.6 443.6,411.3 446.8,411.0 449.9,410.6 453.0,410.3 456.1,410.1 459.3,409.9 462.4,409.8 465.6,409.6 468.7,409.4 471.9,409.2 475.0,409.1 478.1,408.9 481.3,408.7 484.4,408.5 487.6,408.3 490.7,408.2 493.9,408.0 497.0,407.8 500.0,407.8 503.1,407.8 506.1,407.7 509.1,407.7 512.1,407.7 515.2,407.7 518.2,407.7 521.2,407.7 524.3,407.6 527.3,407.6 530.3,407.6 533.4,407.6 536.4,407.6 539.4,407.6 542.4,407.5 545.5,407.5 548.5,407.5 551.5,407.5 554.6,407.5 557.6,407.4 560.6,407.4 563.6,407.4 566.7,407.4 569.7,407.4 572.7,407.4 575.8,407.3 578.8,407.3 581.8,407.3 584.9,407.3 587.9,407.3 590.9,407.3 593.9,407.2 597.0,407.2 600.0,407.2 603.0,407.2 606.0,407.2 609.0,407.2 612.0,407.2 615.0,407.2 618.0,407.2 621.1,407.2 624.1,407.2 627.1,407.2 630.1,407.2 633.1,407.2 636.1,407.2 639.1,407.2 642.1,407.2 645.1,407.2 648.1,407.2 651.1,407.1 654.1,407.1 657.1,407.1 660.2,407.1 663.2,407.1 666.2,407.1 669.2,407.1 672.2,407.1 675.2,407.1 678.2,407.1 681.2,407.1 684.2,407.1 687.2,407.1 690.2,407.1 693.2,407.1 696.2,407.1 699.2,407.1 702.3,407.1 705.3,407.1 708.3,407.1 711.3,407.1 714.3,407.1 717.3,407.1 720.3,407.1 723.3,407.1 726.3,407.1 729.3,407.1 732.3,407.1 735.3,407.1 738.3,407.1 741.4,407.1 744.4,407.1 747.4,407.1 750.4,407.0 753.4,407.0 756.4,407.0 759.4,407.0 762.4,407.0 765.4,407.0 768.4,407.0 771.4,407.0 774.4,407.0 777.4,407.0 780.5,407.0 783.5,407.0 786.5,407.0 789.5,407.0 792.5,407.0 795.5,407.0 798.5,407.0 801.5,407.0 804.5,407.0 807.5,407.0 810.5,407.0 813.5,407.0 816.5,407.0 819.5,407.0 822.6,407.0 825.6,407.0 828.6,407.0 831.6,407.0 834.6,407.0 837.6,407.0 840.6,407.0 843.6,407.0 846.6,407.0 849.6,407.0 852.6,406.9 855.6,406.9 858.6,406.9 861.7,406.9 864.7,406.9 867.7,406.9 870.7,406.9 873.7,406.9 876.7,406.9 879.7,406.9 882.7,406.9 885.7,406.9 888.7,406.9 891.7,406.9 894.7,406.9 897.7,406.9 900.8,406.9 903.8,406.9 906.8,406.9 909.8,406.9 912.8,406.9 915.8,406.9 918.8,406.9 921.8,406.9 924.8,406.9 927.8,406.9 930.8,406.9 933.8,406.9 936.8,406.9 939.8,406.9 942.9,406.9 945.9,406.9 948.9,406.9 951.9,406.8 954.9,406.8 957.9,406.8 960.9,406.8 963.9,406.8 966.9,406.8 969.9,406.8 972.9,406.8 975.9,406.8 978.9,406.8 982.0,406.8 985.0,406.8 988.0,406.8 991.0,406.8 994.0,406.8 997.0,406.8 1000.0,406.8 1003.1,406.9 1006.1,406.9 1009.2,407.0 1012.2,407.1 1015.3,407.1 1018.4,407.2 1021.4,407.3 1024.5,407.3 1027.5,407.4 1030.6,407.4 1033.6,407.5 1036.7,407.6 1039.8,407.6 1042.8,407.7 1045.9,407.8 1048.9,407.8 1052.0,407.9 1055.0,407.9 1058.1,407.9 1061.1,407.9 1064.2,407.9 1067.2,407.9 1070.2,407.9 1073.3,407.9 1076.3,407.9 1079.4,407.9 1082.4,407.9 1085.4,407.9 1088.5,407.9 1091.5,407.9 1094.6,407.9 1097.6,407.9 1100.6,407.9 1103.7,407.9 1106.7,407.9 1109.8,407.9 1112.8,407.9 1115.8,407.9 1118.9,407.9 1121.9,407.9 1125.0,407.9 1128.0,407.9 1132.0,405.0 1135.0,405.0 1138.0,405.0 1141.0,405.0 1144.0,405.0 1147.6,399.0 1152.4,400.3 1155.6,402.5 1158.8,404.8 1162.0,407.0 1165.2,409.3 1168.4,411.5 1171.6,413.0 1174.8,414.5 1178.1,416.1 1181.3,417.6 1184.5,419.1 1187.5,419.9 1190.5,420.6 1193.5,421.4 1196.5,422.1 1199.5,422.9 1202.5,423.7 1205.5,424.4 1208.5,425.2 1211.7,425.5 1214.9,425.8 1218.1,426.0 1221.3,426.3 1224.5,426.6 1227.8,426.9 1231.0,427.2 1234.2,427.4 1237.4,427.7 1240.6,428.0 1243.9,428.2 1247.3,428.4 1250.7,428.6 1254.0,428.8 1257.3,429.0 1260.7,429.2 1263.7,429.2 1266.7,429.2 1269.7,429.2 1272.7,429.2 1275.7,429.2 1278.7,429.2 1281.7,429.2 1284.7,429.2 1287.7,429.2 1290.7,429.2 1293.7,429.2 1296.7,429.2 1299.7,429.2 1302.7,429.2 1305.7,429.2 1308.7,429.2 1311.7,429.2 1314.7,429.2 1317.7,429.2 1320.7,429.2 1323.7,429.2 1326.7,429.2 1329.7,429.2 1332.7,429.2 1335.7,429.2 1338.7,429.2 1341.7,429.2 1344.8,429.2 1347.8,429.2 1350.8,429.2 1353.8,429.2 1356.8,429.2 1359.8,429.2 1362.8,429.2 1365.8,429.2 1368.8,429.2 1371.8,429.2 1374.8,429.2 1377.8,429.2 1380.8,429.2 1383.8,429.2 1386.8,429.2 1389.8,429.2 1392.8,429.2 1395.8,429.2 1398.8,429.2 1401.8,429.2 1404.8,429.2 1407.8,429.2 1410.8,429.2 1413.8,429.2 1416.8,429.2 1419.8,429.2 1422.8,429.2 1425.8,429.2 1428.8,429.2 1431.8,429.2 1434.8,429.2 1437.8,429.2 1440.8,429.2 1443.8,429.2 1446.8,429.2 1449.8,429.2 1452.8,429.2 1455.8,429.2 1458.8,429.2 1461.8,429.2 1464.8,429.2 1467.8,429.2 1470.8,429.2 1473.8,429.2 1476.8,429.2 1479.8,429.2 1482.8,429.2 1485.8,429.2 1488.8,429.2 1491.8,429.2 1494.8,429.2 1497.8,429.2 1500.8,429.2 1503.8,429.2 1506.9,429.2 1509.9,429.2 1512.9,429.2 1515.9,429.2 1518.9,429.2 1521.9,429.2 1524.9,429.2 1527.9,429.2 1530.9,429.2 1533.9,429.2 1536.9,429.2 1539.9,429.2 1542.9,429.2 1545.9,429.2 1548.9,429.2 1551.9,429.2 1554.9,429.2 1557.9,429.2 1560.9,429.2 1563.9,429.2 1566.9,429.2 1569.9,429.2 1572.9,429.2 1575.9,429.2 1578.9,429.2 1581.9,429.2 1584.9,429.2 1587.9,429.2 1590.9,429.2 1593.9,429.2 1596.9,429.2 1599.9,429.2 1602.9,429.2 1605.9,429.2 1608.9,429.2 1611.9,429.2 1614.9,429.2 1617.9,429.2 1620.9,429.2 1623.9,429.2 1626.9,429.2 1629.9,429.2 1632.9,429.2 1635.9,429.2 1638.9,429.2 1641.9,429.2 1644.9,429.2 1647.9,429.2 1650.9,429.2 1653.9,429.2 1656.9,429.2 1659.9,429.2 1662.9,429.2 1665.9,429.2 1669.0,429.2 1672.0,429.2 1675.0,429.2 1678.0,429.2 1681.0,429.2 1684.0,429.2 1687.0,429.2 1690.0,429.2 1693.0,429.2 1696.0,429.2 1699.0,429.2 1702.0,429.2 1705.0,429.2 1708.0,429.2 1711.0,429.2 1714.0,429.2 1717.0,429.2 1720.0,429.2 1723.0,429.2 1726.0,429.2 1729.0,429.2 1732.0,429.2 1735.0,429.2 1738.0,429.2 1741.0,429.2 1744.0,429.2 1747.0,429.2 1750.0,429.2" fill="none" stroke="#84c92a" stroke-width="1.2" stroke-linejoin="round"/><polyline points="3.0,735.0 7.0,735.0 11.1,735.0 15.1,735.0 19.2,735.0 23.2,735.0 27.2,735.0 31.3,735.0 35.3,735.0 39.3,735.0 43.4,735.0 47.4,735.0 51.5,735.0 55.5,735.0 60.5,733.0 65.6,731.0 69.6,730.0 73.7,728.9 77.7,727.9 81.7,726.9 85.8,725.8 89.8,724.8 93.8,723.8 97.9,722.8 101.9,721.7 105.9,720.7 110.0,719.7 114.0,718.6 118.0,717.6 122.1,716.6 126.1,715.5 130.1,714.5 134.2,713.5 138.2,712.5 142.2,711.4 146.3,710.4 150.3,709.4 154.4,708.3 158.4,707.3 162.4,706.3 166.5,705.2 170.5,704.2 174.5,703.2 178.6,702.1 182.6,701.1 186.6,700.1 190.7,699.1 194.7,698.0 198.7,697.0 202.8,696.0 206.8,694.9 210.8,693.9 214.9,692.9 218.9,691.8 222.9,690.8 227.0,689.8 231.0,688.8 235.1,687.9 239.1,687.0 243.2,686.1 247.3,685.2 251.3,684.3 255.4,683.4 259.5,682.5 263.6,681.7 267.6,680.8 271.7,679.9 275.8,679.0 279.8,678.1 283.9,677.2 288.0,676.3 292.0,675.4 296.1,674.6 300.2,673.7 304.3,672.8 308.3,671.9 312.4,671.0 316.5,670.1 320.5,669.2 324.6,668.3 328.7,667.5 332.7,666.6 336.8,665.7 340.9,664.8 345.0,663.9 349.0,663.0 353.1,662.1 357.2,661.2 361.2,660.4 365.3,659.5 369.4,658.6 373.4,657.7 377.5,656.8 381.6,655.9 385.7,655.0 389.7,654.1 393.8,653.3 397.9,652.4 401.9,651.5 406.0,650.6 410.0,649.8 414.1,649.1 418.1,648.3 422.2,647.5 426.2,646.8 430.2,646.0 434.3,645.2 438.3,644.5 442.4,643.7 446.4,642.9 450.5,642.2 454.5,641.4 458.5,640.6 462.6,639.9 466.6,639.1 470.7,638.3 474.7,637.5 478.8,636.8 482.8,636.0 486.8,635.2 490.9,634.5 494.9,633.7 499.0,632.9 503.0,632.2 507.0,631.4 511.1,630.6 515.1,629.9 519.2,629.1 523.2,628.3 527.2,627.6 531.3,626.8 535.3,626.0 539.4,625.3 543.4,624.5 547.5,623.7 551.5,623.0 555.5,622.2 559.6,621.4 563.6,620.7 567.7,619.9 571.7,619.1 575.8,618.4 579.8,617.6 583.8,616.8 587.9,616.1 591.9,615.3 596.0,614.5 600.0,613.8 604.0,613.2 608.0,612.6 612.0,612.0 616.0,611.4 620.0,610.9 624.0,610.3 628.0,609.7 632.0,609.1 636.0,608.6 640.0,608.0 644.0,607.4 648.0,606.8 652.0,606.2 656.0,605.7 660.0,605.1 664.0,604.5 668.0,603.9 672.0,603.4 676.0,602.8 680.0,602.2 684.0,601.6 688.0,601.1 692.0,600.5 696.0,599.9 700.0,599.3 704.0,598.8 708.0,598.2 712.0,597.6 716.0,597.0 720.0,596.4 724.0,595.9 728.0,595.3 732.0,594.7 736.0,594.1 740.0,593.6 744.0,593.0 748.0,592.4 752.0,591.8 756.0,591.2 760.0,590.8 764.0,590.3 768.0,589.9 772.0,589.4 776.0,589.0 780.0,588.5 784.0,588.1 788.0,587.6 792.0,587.1 796.0,586.7 800.0,586.2 804.0,585.8 808.0,585.3 812.0,584.9 816.0,584.4 820.0,583.9 824.0,583.5 828.0,583.0 832.0,582.6 836.0,582.1 840.0,581.7 844.0,581.2 848.0,580.7 852.0,580.3 856.0,579.8 860.0,579.4 864.0,578.9 868.0,578.5 872.0,578.0 876.0,577.5 880.0,577.1 884.0,576.6 888.0,576.2 892.0,575.7 896.0,575.3 900.0,574.8 904.0,574.3 908.0,573.9 912.0,573.4 916.0,573.0 920.0,572.5 924.0,572.1 928.0,571.6 932.0,571.3 936.0,570.9 940.0,570.6 944.0,570.3 948.0,570.0 952.0,569.6 956.0,569.3 960.0,569.0 964.0,568.6 968.0,568.3 972.0,568.0 976.0,567.7 980.0,567.3 984.0,567.0 988.0,566.7 992.0,566.4 996.0,566.0 1000.0,565.7 1004.0,565.4 1008.0,565.0 1012.0,564.7 1016.0,564.4 1020.0,564.1 1024.0,563.7 1028.0,563.4 1032.0,563.1 1036.0,562.7 1040.0,562.4 1044.0,562.1 1048.0,561.8 1052.0,561.4 1056.0,561.1 1060.0,560.8 1064.0,560.5 1068.0,560.1 1072.0,559.8 1076.0,559.5 1080.0,559.1 1084.0,558.8 1088.0,558.5 1092.0,558.2 1096.0,557.8 1100.0,557.5 1104.0,557.3 1108.0,557.1 1112.0,556.9 1116.0,556.7 1120.0,556.5 1124.0,556.3 1128.0,556.2 1132.0,556.0 1136.0,555.8 1140.0,555.6 1144.0,555.4 1148.0,555.2 1152.0,555.0 1156.0,554.8 1160.0,554.6 1164.0,554.4 1168.0,554.2 1172.0,554.0 1176.0,553.9 1180.0,553.7 1184.0,553.5 1188.0,553.3 1192.0,553.1 1196.0,552.9 1200.0,552.7 1204.2,552.6 1208.4,552.4 1212.5,552.3 1216.7,552.1 1220.9,552.0 1225.1,551.9 1229.2,551.7 1233.4,551.6 1237.6,551.4 1241.8,551.3 1245.9,551.1 1250.1,551.0 1254.3,550.9 1258.5,550.7 1262.6,550.6 1266.8,550.4 1271.0,550.3 1275.1,550.2 1279.3,550.2 1283.4,550.1 1287.5,550.0 1291.7,550.0 1295.8,549.9 1299.9,549.8 1304.0,549.7 1308.2,549.7 1312.3,549.6 1316.4,549.5 1320.6,549.5 1324.7,549.4 1328.8,549.4 1332.9,549.4 1336.9,549.4 1341.0,549.4 1345.1,549.4 1349.2,549.5 1353.3,549.5 1357.3,549.5 1361.4,549.5 1365.5,549.5 1369.6,549.5 1373.7,549.5 1377.8,549.5 1381.8,549.5 1385.9,549.5 1390.0,549.5 1394.1,549.6 1398.2,549.6 1402.2,549.6 1406.3,549.6 1410.4,549.6 1414.5,549.6 1418.6,549.6 1422.7,549.6 1426.7,549.6 1430.8,549.6 1434.9,549.7 1439.0,549.7 1443.1,549.7 1447.1,549.7 1451.2,549.7 1455.3,549.7 1459.4,549.8 1463.6,549.9 1467.7,550.0 1471.8,550.1 1476.0,550.2 1480.1,550.2 1484.2,550.3 1488.4,550.4 1492.5,550.5 1496.6,550.6 1500.8,550.7 1504.9,550.8 1509.1,550.9 1513.2,551.0 1517.3,551.1 1521.5,551.2 1525.6,551.3 1529.7,551.3 1533.9,551.4 1538.0,551.5 1542.1,551.6 1546.3,551.7 1550.4,551.8 1554.5,552.0 1558.6,552.1 1562.7,552.3 1566.8,552.4 1570.9,552.6 1575.0,552.7 1579.1,552.9 1583.2,553.0 1587.3,553.2 1591.4,553.3 1595.5,553.5 1599.6,553.6 1603.7,553.8 1607.8,553.9 1611.9,554.1 1616.0,554.2 1620.1,554.4 1624.2,554.5 1628.3,554.7 1632.4,554.8 1636.5,555.0 1640.6,555.2 1644.7,555.3 1648.7,555.5 1652.8,555.7 1656.9,555.9 1661.0,556.0 1665.1,556.2 1669.2,556.4 1673.2,556.5 1677.3,556.7 1681.4,556.9 1685.5,557.1 1689.6,557.2 1693.7,557.4 1697.7,557.6 1701.8,557.7 1705.9,557.9 1710.0,558.1 1714.1,558.3 1718.1,558.4 1722.2,558.6 1726.3,558.8 1730.4,558.9 1734.5,559.1 1738.6,559.3 1742.6,559.5 1746.7,559.6 1750.8,559.8" fill="none" stroke="#f0892a" stroke-width="1.2" stroke-linejoin="round"/><polyline points="3.0,962.0 5.1,962.0 7.1,962.0 9.2,962.0 11.2,962.0 13.3,962.0 15.3,962.0 17.4,962.0 19.4,962.0 21.5,962.0 23.5,962.0 25.6,962.0 27.6,962.0 29.7,962.0 31.7,962.0 33.8,962.0 35.8,962.0 37.9,962.0 39.9,962.0 42.0,962.0 44.1,962.1 46.1,962.2 48.2,962.3 50.2,962.4 52.3,962.5 54.3,962.6 56.4,962.6 58.4,962.7 60.5,962.8 62.5,962.9 64.6,963.0 66.6,963.1 68.7,963.2 70.7,963.3 72.8,963.4 74.8,963.5 76.9,963.6 78.9,963.7 81.0,963.8 83.0,963.7 85.1,963.6 87.1,963.6 89.2,963.5 91.2,963.5 93.2,963.4 95.3,963.3 97.3,963.3 99.4,963.2 101.4,963.2 103.4,963.1 105.5,963.1 107.5,963.0 109.6,962.9 111.6,962.9 113.7,962.8 115.7,962.8 117.7,962.7 119.8,962.6 121.8,962.6 123.9,962.5 125.9,962.5 127.9,962.4 130.0,962.4 132.0,962.3 134.1,962.2 136.1,962.2 138.1,962.1 140.2,962.1 142.2,962.0 144.3,961.9 146.3,961.9 148.3,961.8 150.4,961.8 152.4,961.7 154.5,961.7 156.5,961.6 158.5,961.5 160.6,961.5 162.6,961.4 164.7,961.4 166.7,961.3 168.8,961.2 171.0,960.9 173.3,960.6 175.6,960.2 177.7,958.4 179.8,956.6 181.9,954.8 184.0,953.0 186.0,952.1 188.0,951.3 190.0,950.4 192.0,949.5 194.0,948.7 196.0,947.8 198.0,946.9 200.0,946.1 202.0,945.2 204.0,944.3 206.0,943.5 208.0,942.6 210.0,941.7 212.0,940.9 214.0,940.0 216.0,939.1 218.0,938.3 220.0,937.4 222.2,936.0 224.3,934.6 226.4,933.2 228.6,931.8 230.8,930.5 232.9,929.1 235.1,927.7 237.2,926.3 239.3,924.9 241.5,923.5 243.5,922.4 245.5,921.2 247.5,921.2 249.6,919.4 251.6,919.3 253.6,918.2 255.6,916.9 257.6,916.7 259.6,915.1 261.7,914.9 263.7,913.5 265.7,912.7 267.7,912.4 269.7,912.2 271.7,910.2 273.8,909.5 275.8,909.3 277.8,909.0 279.8,907.4 282.2,905.5 284.6,903.4 287.0,903.5 289.4,904.8 291.8,904.3 294.2,901.2 296.6,899.5 298.7,899.6 300.7,898.2 302.8,897.5 304.8,897.0 306.9,896.8 308.9,897.2 311.0,896.2 313.4,893.5 315.7,891.9 318.1,892.2 320.5,892.5 322.9,892.4 325.3,889.5 327.3,888.9 329.3,888.9 331.3,887.7 333.4,887.4 335.4,887.3 337.4,887.7 339.4,886.9 341.4,886.4 343.4,886.5 345.5,885.9 347.5,885.3 349.5,885.7 351.5,885.2 353.5,884.2 355.5,884.3 357.6,883.9 359.6,884.1 361.6,883.5 363.6,882.8 366.0,880.5 368.4,879.7 370.8,877.0 372.9,876.1 375.0,876.3 377.1,876.5 379.2,875.2 381.3,875.5 383.4,874.5 385.5,875.2 387.6,874.6 390.0,873.2 392.4,871.0 394.8,869.0 397.2,869.9 399.6,869.4 402.0,870.3 404.4,870.3 406.8,868.8 409.2,867.2 411.6,865.4 414.0,863.8 417.5,865.0 419.6,864.0 421.8,862.7 423.9,860.5 426.0,859.0 428.1,859.2 430.1,858.2 432.1,859.2 434.2,859.0 436.2,859.5 438.3,859.2 440.4,858.3 442.4,858.4 444.4,858.8 446.5,857.7 448.6,858.4 450.6,857.9 452.6,857.7 454.7,858.3 457.0,861.2 459.0,857.5 461.0,855.7 463.0,852.3 465.1,851.4 467.2,851.3 469.4,851.2 471.5,851.1 473.5,851.6 475.5,850.3 477.6,850.8 479.6,850.8 481.6,851.3 483.6,851.1 485.7,851.1 487.7,850.1 489.7,850.2 491.7,850.0 493.8,850.8 495.8,850.8 497.8,850.0 501.4,846.8 503.8,848.3 506.2,850.4 508.6,853.0 510.6,850.4 512.6,848.1 514.6,846.4 516.7,846.1 518.8,846.1 521.0,845.3 523.1,844.7 525.2,845.1 527.3,844.8 529.5,844.9 531.6,845.3 533.7,844.4 535.8,845.5 537.9,846.0 539.9,847.0 542.0,847.5 544.2,846.1 546.4,843.3 548.6,842.9 550.8,840.9 553.0,838.7 555.4,839.3 557.8,839.2 560.1,838.5 562.5,838.7 564.5,839.2 566.5,839.4 568.5,841.0 570.5,840.7 572.5,841.4 574.5,842.8 576.7,840.7 578.9,839.0 581.1,837.7 583.4,835.6 585.6,833.9 587.8,832.6 590.0,831.5 592.2,831.5 594.3,832.6 596.5,832.8 598.6,834.8 600.8,834.9 603.2,839.2 605.6,837.6 608.0,835.1 610.4,833.9 612.9,834.7 615.3,836.1 617.8,837.3 620.3,838.8 622.5,836.7 624.7,836.4 626.9,835.2 629.1,833.0 631.2,831.6 633.3,832.5 635.4,832.8 637.5,833.8 639.6,835.1 641.7,835.9 643.8,837.2 646.1,836.3 648.4,833.9 650.7,832.2 653.0,831.6 655.0,833.0 657.0,833.0 659.0,833.0 661.0,834.3 663.0,834.2 665.0,835.6 667.0,836.2 669.0,834.8 671.0,832.5 673.0,830.0 675.0,827.5 677.4,826.0 679.7,825.0 682.0,823.6 684.4,823.0 686.5,823.4 688.6,822.9 690.6,823.2 692.7,822.5 694.8,822.2 696.9,823.1 699.0,823.3 701.1,823.0 703.1,822.9 705.2,822.8 707.3,822.7 709.4,822.2 711.5,821.0 713.6,820.7 715.6,819.6 717.7,818.3 719.8,817.5 721.9,817.5 723.9,816.7 725.9,816.2 728.0,816.4 730.0,816.4 732.0,815.1 734.0,815.4 736.0,815.1 738.1,814.6 740.1,813.2 742.1,812.5 744.1,812.0 746.1,811.5 748.2,811.1 750.2,811.3 752.2,811.3 754.2,810.7 756.2,809.7 758.3,809.2 760.3,809.0 762.3,808.8 764.4,807.1 766.4,807.6 768.4,807.5 770.5,806.8 772.5,806.3 774.5,805.4 776.6,804.4 778.6,804.9 780.6,803.7 782.7,804.0 784.7,803.8 786.7,802.4 788.8,801.9 790.8,802.3 792.8,801.5 794.9,800.1 796.9,799.6 798.9,799.1 801.0,799.9 803.0,798.8 805.1,798.4 807.3,796.5 809.4,796.2 811.4,796.6 813.5,796.6 815.5,795.8 817.5,795.1 819.5,795.2 821.6,794.4 823.6,794.0 825.6,795.3 827.7,794.5 829.7,794.1 831.7,794.6 833.8,793.5 835.8,794.0 837.8,793.7 839.9,792.5 841.9,792.4 843.9,792.2 845.9,791.9 848.0,792.3 850.0,791.9 852.2,791.8 854.5,792.4 856.7,792.2 858.9,793.8 861.1,793.2 863.4,793.6 865.6,794.0 867.7,793.9 869.8,794.1 871.9,793.1 873.9,793.7 876.0,792.8 878.1,792.6 880.2,792.3 882.3,791.2 884.4,791.7 886.4,791.0 888.5,790.5 890.6,791.0 893.2,790.1 895.8,787.7 898.4,786.9 901.0,788.2 903.6,790.0 906.2,791.0 908.4,790.7 910.6,790.0 912.8,789.9 915.0,789.6 917.1,789.6 919.3,788.1 921.5,788.4 923.6,787.6 925.8,787.2 928.0,787.2 930.2,788.2 932.5,788.3 934.8,788.9 937.0,789.8 939.2,790.6 941.5,790.4 943.8,791.0 945.8,791.0 947.8,790.6 949.8,790.3 951.8,790.4 953.8,789.8 955.8,789.7 957.8,789.4 959.8,789.9 961.8,789.3 963.8,789.3 965.8,789.2 967.8,787.9 969.9,788.2 971.9,788.5 973.9,788.2 975.9,786.8 977.9,786.6 979.9,786.8 981.9,786.0 983.9,786.1 985.9,785.6 987.9,786.3 989.9,786.3 991.9,786.2 994.0,784.8 996.0,785.5 998.0,785.2 1000.0,784.1 1002.0,785.1 1004.0,785.0 1006.0,784.0 1008.1,783.7 1010.2,784.9 1012.3,784.2 1014.4,784.4 1016.5,785.3 1018.6,785.2 1020.7,784.2 1022.8,784.7 1024.9,785.0 1027.0,784.8 1029.1,784.7 1031.2,785.0 1033.3,785.7 1035.4,784.7 1037.5,785.6 1039.6,786.0 1041.7,786.2 1043.8,785.9 1045.8,786.8 1047.9,787.6 1050.0,787.8 1052.1,787.4 1054.2,789.3 1056.2,789.3 1058.3,790.0 1060.4,788.9 1062.5,789.5 1064.6,789.5 1066.7,791.1 1068.8,791.0 1070.8,791.3 1072.9,791.6 1075.0,792.7 1077.1,794.1 1079.2,794.6 1081.2,794.3 1083.3,794.8 1085.4,796.6 1087.5,796.7 1089.6,797.5 1091.7,797.2 1093.8,797.7 1095.8,799.4 1097.9,799.6 1100.0,800.3 1102.1,798.7 1104.2,799.2 1106.2,797.9 1108.3,797.2 1110.4,795.2 1112.5,795.0 1115.0,796.4 1117.5,796.0 1120.0,797.6 1122.3,800.8 1124.7,802.8 1127.0,805.5 1128.5,797.6 1129.7,806.4 1131.4,814.3 1135.0,817.0 1137.6,812.6 1139.8,814.8 1142.0,817.0 1144.3,821.4 1145.5,841.6 1146.0,878.6 1146.8,897.0 1148.2,910.3 1151.7,926.1 1154.5,935.0 1157.9,942.0 1161.5,946.5 1163.7,948.2 1165.8,949.9 1168.0,951.0 1170.2,952.1 1172.4,953.2 1174.6,954.3 1176.7,954.6 1178.8,954.8 1180.9,955.1 1183.0,955.4 1185.3,955.5 1187.6,955.7 1189.9,955.9 1192.2,956.0 1194.3,956.1 1196.5,956.2 1198.6,956.2 1200.8,956.3 1202.9,956.4 1205.0,956.5 1207.2,956.5 1209.3,956.6 1211.4,956.7 1213.6,956.8 1215.7,956.8 1217.9,956.9 1220.0,957.0 1222.0,957.0 1224.1,957.0 1226.1,957.0 1228.2,957.0 1230.2,957.0 1232.3,957.0 1234.3,957.0 1236.4,957.0 1238.4,957.0 1240.5,957.0 1242.5,957.0 1244.5,956.9 1246.6,956.9 1248.6,956.9 1250.7,956.9 1252.7,956.9 1254.8,956.9 1256.8,956.9 1258.9,956.9 1260.9,956.9 1263.0,956.9 1265.0,956.9 1267.0,956.9 1269.0,956.8 1271.1,956.8 1273.1,956.8 1275.1,956.8 1277.1,956.7 1279.2,956.7 1281.2,956.7 1283.2,956.7 1285.2,956.6 1287.2,956.6 1289.3,956.6 1291.3,956.5 1293.3,956.5 1295.3,956.5 1297.4,956.5 1299.4,956.4 1301.4,956.4 1303.4,956.4 1305.5,956.4 1307.5,956.3 1309.5,956.3 1311.5,956.3 1313.5,956.2 1315.6,956.2 1317.6,956.2 1319.6,956.2 1321.6,956.1 1323.7,956.1 1325.7,956.1 1327.7,956.1 1329.7,956.0 1331.8,956.0 1333.8,956.0 1335.8,955.9 1337.8,955.9 1339.8,955.9 1341.9,955.9 1343.9,955.8 1345.9,955.8 1347.9,955.8 1350.0,955.8 1352.0,955.7 1354.0,955.7 1356.0,955.7 1358.0,955.6 1360.0,955.6 1362.0,955.6 1364.1,955.6 1366.1,955.5 1368.1,955.5 1370.1,955.5 1372.1,955.4 1374.1,955.4 1376.1,955.4 1378.1,955.4 1380.2,955.3 1382.2,955.3 1384.2,955.3 1386.2,955.3 1388.2,955.2 1390.2,955.2 1392.2,955.2 1394.2,955.1 1396.2,955.1 1398.3,955.1 1400.3,955.1 1402.3,955.0 1404.3,955.0 1406.3,955.0 1408.3,954.9 1410.3,954.9 1412.3,954.9 1414.3,954.9 1416.4,954.8 1418.4,954.8 1420.4,954.8 1422.4,954.8 1424.4,954.7 1426.4,954.7 1428.4,954.7 1430.4,954.6 1432.5,954.6 1434.5,954.6 1436.5,954.6 1438.5,954.5 1440.5,954.5 1442.5,954.5 1444.5,954.4 1446.6,954.4 1448.6,954.4 1450.6,954.4 1452.7,954.3 1454.7,954.3 1456.7,954.3 1458.7,954.3 1460.8,954.2 1462.8,954.2 1464.8,954.2 1466.8,954.1 1468.8,954.1 1470.9,954.1 1472.9,954.1 1474.9,954.0 1477.0,954.0 1479.0,954.0 1481.0,954.0 1483.0,953.9 1485.0,953.9 1487.1,953.9 1489.1,953.8 1491.1,953.8 1493.1,953.8 1495.2,953.8 1497.2,953.7 1499.2,953.7 1501.2,953.7 1503.3,953.7 1505.3,953.6 1507.3,953.6 1509.3,953.6 1511.4,953.5 1513.4,953.5 1515.4,953.5 1517.4,953.5 1519.5,953.4 1521.5,953.4 1523.5,953.4 1525.5,953.4 1527.6,953.3 1529.6,953.3 1531.7,953.3 1533.7,953.4 1535.8,953.4 1537.9,953.4 1539.9,953.5 1542.0,953.5 1544.1,953.5 1546.2,953.6 1548.2,953.6 1550.3,953.6 1552.4,953.7 1554.4,953.7 1556.5,953.8 1558.6,953.8 1560.7,953.8 1562.7,953.9 1564.8,953.9 1566.9,953.9 1568.9,954.0 1571.0,954.0 1573.1,953.9 1575.1,953.9 1577.2,953.8 1579.2,953.8 1581.3,953.7 1583.3,953.7 1585.4,953.6 1587.4,953.6 1589.5,953.5 1591.5,953.4 1593.6,953.4 1595.6,953.3 1597.7,953.3 1599.7,953.2 1601.8,953.2 1603.8,953.1 1605.9,953.1 1607.9,953.0 1610.0,953.0 1612.0,952.9 1614.1,952.8 1616.1,952.8 1618.2,952.7 1620.2,952.7 1622.3,952.6 1624.3,952.6 1626.4,952.5 1628.4,952.5 1630.5,952.4 1632.5,952.4 1634.5,952.4 1636.5,952.3 1638.5,952.3 1640.5,952.3 1642.5,952.3 1644.5,952.2 1646.5,952.2 1648.5,952.2 1650.5,952.2 1652.6,952.1 1654.6,952.1 1656.6,952.1 1658.6,952.1 1660.6,952.0 1662.6,952.0 1664.6,952.0 1666.6,952.0 1668.6,952.0 1670.6,951.9 1672.6,951.9 1674.6,951.9 1676.6,951.9 1678.6,951.8 1680.6,951.8 1682.6,951.8 1684.6,951.8 1686.6,951.7 1688.6,951.7 1690.7,951.7 1692.7,951.7 1694.7,951.7 1696.7,951.6 1698.7,951.6 1700.7,951.6 1702.7,951.6 1704.7,951.5 1706.7,951.5 1708.7,951.5 1710.7,951.5 1712.7,951.4 1714.7,951.4 1716.7,951.4 1718.7,951.4 1720.7,951.4 1722.7,951.3 1724.7,951.3 1726.7,951.3 1728.7,951.3 1730.8,951.2 1732.8,951.2 1734.8,951.2 1736.8,951.2 1738.8,951.1 1740.8,951.1 1742.8,951.1 1744.8,951.1 1746.8,951.0 1748.8,951.0 1750.8,951.0" fill="none" stroke="#7a2f9a" stroke-width="1.25" stroke-linejoin="round"/><polyline points="3.0,265.5 4.5,265.5 6.1,265.5 7.6,265.5 9.1,265.5 10.6,265.5 12.2,265.5 13.7,265.5 15.2,265.5 16.8,265.5 18.3,265.5 19.8,265.5 21.4,265.5 22.9,265.5 24.4,265.5 25.9,265.5 27.5,265.5 29.0,265.5 30.5,265.5 32.1,265.5 33.6,265.5 35.1,265.5 36.6,265.5 38.2,265.5 39.7,265.5 41.2,265.5 42.8,265.5 44.3,265.5 45.8,265.5 47.4,265.5 48.9,265.5 50.4,265.5 51.9,265.5 53.5,265.5 55.0,265.5 56.0,260.0 56.5,270.0 57.5,264.5 59.0,264.5 60.5,264.5 62.0,264.5 63.5,264.5 64.3,255.0 65.0,270.0 66.0,260.0 68.0,258.6 69.5,256.9 71.0,255.2 72.5,253.7 74.0,252.1 75.5,250.7 77.0,249.3 78.5,248.0 80.0,246.7 81.5,245.5 83.0,244.3 84.5,243.3 86.0,242.2 87.5,241.2 89.0,240.2 90.5,239.3 92.0,238.4 93.5,237.6 95.0,236.8 96.5,236.0 98.0,235.2 99.5,234.5 101.0,233.8 102.5,233.2 104.0,232.6 105.5,232.0 107.0,231.4 108.5,230.9 110.0,230.4 111.5,229.9 113.0,229.4 114.5,229.0 116.0,228.5 117.5,228.1 119.0,227.7 120.5,227.4 122.0,227.0 123.5,226.7 125.0,226.3 126.5,226.0 128.0,225.7 129.5,225.4 131.0,225.1 132.5,224.9 134.0,224.6 135.5,224.4 137.0,224.2 138.5,223.9 140.0,223.7 141.5,223.5 143.0,223.3 144.5,223.1 146.0,223.0 147.5,222.8 149.0,222.6 150.5,222.5 152.0,222.3 153.5,222.2 155.0,222.1 156.5,221.9 158.0,221.8 159.5,221.7 161.0,221.6 162.5,221.5 164.0,221.4 165.5,221.3 167.0,221.2 168.5,221.1 170.0,221.0 171.7,221.2 173.3,221.3 175.0,221.5 176.6,222.6 178.1,223.7 179.7,224.8 181.3,225.9 182.8,227.0 184.4,228.1 186.0,228.4 187.5,228.6 189.1,228.9 190.6,229.2 192.2,229.4 193.7,229.7 195.2,229.9 196.8,230.2 198.3,230.5 199.9,230.7 201.4,231.0 203.0,231.2 204.5,231.7 206.1,232.1 207.6,232.5 209.2,232.9 210.7,233.3 212.3,233.7 213.8,234.1 215.4,234.6 216.9,235.0 218.5,235.4 220.0,235.8 221.7,236.2 223.5,236.7 225.2,237.2 226.9,237.6 228.7,238.1 230.4,238.5 232.1,238.3 233.9,239.0 235.6,240.0 237.3,238.7 239.1,238.6 240.8,239.6 242.4,239.6 244.0,239.0 245.6,238.6 247.2,238.7 248.8,238.5 250.4,238.8 252.1,239.0 253.7,238.9 255.3,239.9 256.9,238.8 258.5,239.3 260.1,238.5 261.7,239.2 263.2,239.1 264.8,238.6 266.3,239.4 267.8,239.1 269.3,240.9 270.9,240.7 272.4,240.2 273.9,241.0 275.4,242.3 277.0,240.7 278.5,242.5 280.0,241.9 281.5,242.2 283.1,243.2 284.6,242.7 286.3,241.5 287.9,240.8 289.6,240.2 291.2,239.9 292.9,237.9 294.9,239.5 297.0,241.7 298.6,242.0 300.3,241.3 301.9,240.7 303.5,239.8 305.2,239.3 306.8,238.2 308.4,237.9 310.1,237.4 311.7,237.9 313.8,240.1 315.8,241.2 317.4,239.9 318.9,238.8 320.4,237.8 322.0,237.9 324.1,240.0 326.2,240.6 327.8,241.2 329.4,240.5 330.9,239.3 332.5,239.0 334.1,238.9 335.6,239.0 337.2,238.0 338.8,238.4 340.3,237.8 341.9,239.0 343.4,238.8 345.0,237.5 347.0,235.7 349.0,233.8 351.1,234.8 353.3,237.0 355.0,237.5 356.8,235.5 358.5,235.1 360.3,233.7 362.0,234.0 363.8,233.8 365.4,234.6 367.1,235.7 368.7,235.9 370.4,237.6 372.0,238.5 373.6,237.0 375.3,237.2 376.9,236.4 378.5,236.7 380.2,235.5 381.8,235.1 383.4,235.3 385.1,234.8 386.7,235.0 388.4,235.9 390.1,236.5 391.9,237.7 393.6,238.1 395.3,239.0 397.0,239.2 398.7,239.1 400.4,237.0 402.0,235.9 403.7,236.4 405.4,234.4 406.9,234.1 408.5,235.8 410.0,236.1 411.6,235.3 413.1,237.5 414.7,238.1 416.2,237.9 417.8,238.6 419.4,239.3 420.9,238.3 422.4,239.6 424.0,240.0 425.5,239.5 427.0,239.7 428.5,239.1 430.0,238.7 431.5,237.6 433.0,237.8 434.5,236.9 436.0,236.4 437.5,234.8 439.0,233.9 440.5,233.6 442.0,233.6 443.5,232.5 445.0,232.9 446.6,233.1 448.1,232.0 449.7,231.6 451.2,231.1 452.8,230.7 454.4,229.8 455.9,228.2 457.5,228.8 459.6,233.3 461.7,236.5 463.2,236.7 464.8,235.8 466.3,235.5 467.9,235.5 469.4,233.8 470.9,235.0 472.5,233.5 474.0,233.8 475.5,232.6 477.1,232.9 478.6,233.8 480.1,232.4 481.7,233.4 483.2,233.8 484.7,232.6 486.3,232.2 487.8,232.2 489.3,232.5 490.9,232.5 492.4,232.0 493.9,231.9 495.5,230.5 497.0,231.2 499.1,231.7 501.2,233.8 503.1,231.1 504.9,230.1 506.7,227.1 508.5,225.4 510.3,227.3 512.1,227.8 514.0,229.6 515.8,232.3 517.5,231.1 519.3,231.2 521.0,230.6 522.8,229.8 524.5,228.3 526.2,228.0 527.9,228.7 529.6,229.2 531.3,229.9 532.9,229.8 534.6,231.2 536.3,231.2 538.0,228.8 539.6,229.6 541.3,228.6 543.0,226.7 544.7,226.9 546.4,229.2 548.1,231.3 549.9,232.9 551.6,233.0 553.3,234.4 554.9,233.2 556.5,232.5 558.1,233.4 559.7,231.2 561.3,231.3 562.9,229.7 564.4,229.9 566.0,230.2 567.6,227.8 569.2,228.6 570.8,227.3 572.4,227.5 574.0,226.0 575.6,227.6 577.3,227.7 578.9,230.4 580.6,230.6 582.2,230.8 583.8,231.9 585.5,234.1 587.1,235.2 588.8,236.5 590.3,234.8 591.9,233.1 593.4,232.2 595.0,230.8 596.6,230.7 598.1,227.5 599.7,227.9 601.2,226.0 602.9,227.7 604.5,227.2 606.1,229.9 607.8,230.5 609.4,231.0 610.9,231.1 612.4,228.9 613.9,228.3 615.5,227.5 617.0,228.0 618.5,226.3 620.0,225.3 621.6,225.8 623.2,226.8 624.8,227.3 626.4,227.6 628.0,228.5 629.6,231.0 631.2,230.6 632.8,231.9 634.4,231.9 635.9,229.5 637.5,228.6 639.1,228.2 640.6,226.5 642.2,226.0 643.8,225.3 645.3,227.1 646.8,227.7 648.4,228.3 649.9,228.7 651.5,230.1 653.0,230.0 654.6,230.4 656.1,228.9 657.7,228.7 659.2,226.7 660.8,227.6 662.3,226.4 663.9,226.4 665.4,225.6 667.0,224.7 668.6,226.1 670.2,227.4 671.8,231.2 673.4,231.3 675.0,234.0 676.6,234.3 678.1,234.3 679.7,234.5 681.2,235.8 682.8,235.6 684.4,235.9 685.9,233.6 687.5,233.7 689.0,232.2 690.6,231.9 692.2,232.1 693.7,231.8 695.3,231.4 696.8,231.4 698.4,231.6 699.9,233.2 701.5,232.3 703.0,231.8 704.6,233.4 706.1,233.6 707.7,232.5 709.2,231.9 710.8,232.1 712.3,231.9 713.9,232.5 715.4,232.0 717.0,233.0 718.5,234.4 720.0,237.0 721.5,236.5 723.0,237.2 724.5,238.0 726.0,237.7 727.5,237.0 729.0,237.1 730.5,237.3 732.0,237.1 733.5,237.0 735.0,236.5 736.5,237.0 738.0,238.5 739.5,236.7 741.0,237.6 742.5,237.9 744.0,238.5 745.5,237.1 747.0,237.2 748.5,237.2 750.0,237.6 751.5,237.8 753.0,238.9 754.5,238.7 756.0,238.0 757.5,238.9 759.0,237.1 760.5,237.1 762.1,238.7 763.6,239.1 765.1,238.3 766.6,238.6 768.1,237.3 769.6,238.3 771.2,239.5 772.7,239.3 774.2,239.4 775.7,239.8 777.2,238.2 778.7,238.0 780.3,238.1 781.8,239.0 783.3,239.4 784.8,240.0 786.3,239.6 787.8,239.5 789.4,239.8 790.9,239.2 792.4,239.4 793.9,238.4 795.4,240.0 796.9,238.9 798.5,240.5 800.0,239.9 801.5,239.2 803.0,239.7 804.6,239.9 806.2,241.2 807.8,242.8 809.4,242.3 810.9,241.6 812.5,240.3 814.0,239.5 815.5,239.4 817.0,240.4 818.5,240.6 820.0,240.2 821.5,239.9 823.0,240.7 824.5,239.4 826.0,240.1 827.5,240.5 829.0,241.6 830.5,241.0 832.0,241.5 833.5,240.6 835.0,240.1 836.5,240.2 838.0,241.8 839.5,241.3 841.0,240.4 842.5,239.8 844.0,240.9 845.5,241.3 847.0,240.8 848.5,240.4 850.0,241.0 851.5,242.0 853.0,243.1 854.5,242.2 856.0,243.4 857.6,241.8 859.2,241.8 860.8,241.4 862.4,241.3 864.0,239.7 865.6,239.7 867.2,240.6 868.7,240.7 870.3,240.4 871.9,239.9 873.4,241.8 875.0,240.6 876.6,241.9 878.1,240.8 879.7,241.0 881.2,242.4 882.8,241.6 884.4,243.3 885.9,242.5 887.5,242.0 889.1,242.3 890.6,243.0 892.2,243.7 893.8,244.6 895.3,243.0 896.9,244.0 898.5,242.9 900.0,241.7 901.6,242.5 903.1,239.8 904.7,238.7 906.2,237.9 907.8,238.0 909.4,238.0 910.9,239.3 912.5,239.4 914.1,239.3 915.6,240.1 917.2,240.1 918.8,239.4 920.3,239.6 921.8,239.8 923.4,242.1 924.9,242.2 926.5,241.2 928.0,242.8 929.6,242.8 931.1,241.7 932.7,241.3 934.3,240.8 935.9,240.0 937.5,239.3 939.0,239.5 940.6,239.2 942.2,240.2 943.8,238.8 945.3,238.1 946.9,240.1 948.4,238.6 950.0,239.1 951.6,240.2 953.1,240.4 954.7,239.7 956.2,239.0 957.8,240.1 959.4,240.0 960.9,241.4 962.5,240.0 964.1,240.5 965.6,241.8 967.2,240.1 968.8,241.1 970.3,242.1 971.9,242.2 973.4,240.7 975.0,241.9 976.5,240.9 978.0,241.1 979.5,243.0 981.1,241.6 982.6,242.8 984.1,243.2 985.6,242.0 987.1,241.9 988.6,243.5 990.1,242.8 991.6,242.1 993.2,243.2 994.7,242.4 996.2,242.4 997.7,241.8 999.2,243.5 1000.7,244.0 1002.2,243.4 1003.7,244.2 1005.3,242.2 1006.8,242.7 1008.3,243.3 1009.8,244.5 1011.3,244.5 1012.8,243.3 1014.3,243.1 1015.8,243.6 1017.4,243.8 1018.9,244.8 1020.4,243.2 1021.9,244.0 1023.5,245.1 1025.0,245.4 1026.6,246.0 1028.1,246.3 1029.7,246.4 1031.2,246.6 1032.8,245.7 1034.4,245.3 1035.9,244.9 1037.5,245.3 1039.1,243.3 1040.6,243.1 1042.2,243.8 1043.8,242.8 1045.3,242.3 1046.8,241.9 1048.4,241.9 1049.9,243.1 1051.5,242.6 1053.0,244.1 1054.5,243.9 1056.1,244.2 1057.6,242.7 1059.2,242.3 1060.7,242.4 1062.2,243.3 1063.8,243.8 1065.3,243.3 1066.9,242.9 1068.4,243.3 1070.0,243.8 1071.5,244.0 1073.0,244.2 1074.6,244.4 1076.1,244.1 1077.7,242.9 1079.2,244.5 1080.8,243.4 1082.3,244.0 1083.8,243.6 1085.4,244.5 1086.9,243.4 1088.5,243.5 1090.0,244.1 1091.7,243.4 1093.5,242.8 1095.2,242.1 1097.0,241.4 1098.8,240.8 1100.5,240.2 1102.3,239.5 1104.1,240.5 1105.8,241.4 1107.6,242.4 1109.4,243.4 1110.9,245.0 1112.5,246.6 1114.0,248.2 1116.0,245.5 1117.9,242.8 1119.8,244.1 1121.6,242.6 1123.3,241.1 1125.1,239.7 1126.9,238.2 1128.2,247.3 1130.2,233.7 1132.1,229.2 1134.7,228.5 1136.0,235.0 1138.6,237.3 1140.6,234.4 1142.2,233.8 1143.8,233.1 1144.4,210.4 1145.7,168.9 1146.6,153.3 1148.3,141.7 1150.3,146.9 1151.9,152.1 1153.5,157.2 1155.1,163.4 1156.8,169.6 1158.4,175.7 1160.0,181.9 1161.6,187.6 1163.1,193.3 1164.7,199.0 1166.2,204.7 1167.8,210.4 1169.4,215.2 1171.0,220.1 1172.7,225.0 1174.3,229.8 1175.9,232.7 1177.5,235.7 1179.1,238.6 1180.7,241.5 1182.3,243.1 1183.8,244.6 1185.4,246.2 1186.9,247.7 1188.5,249.3 1190.1,250.2 1191.6,251.1 1193.2,252.0 1194.7,252.9 1196.3,253.8 1198.0,254.2 1199.8,254.5 1201.5,254.9 1203.2,255.3 1205.0,255.6 1206.7,256.0 1208.3,256.0 1209.8,256.1 1211.4,256.1 1212.9,256.1 1214.5,256.1 1216.0,256.2 1217.6,256.2 1219.1,256.2 1220.7,256.2 1222.2,256.3 1223.8,256.3 1225.3,256.3 1226.9,256.3 1228.4,256.4 1230.0,256.4 1231.5,256.4 1233.0,256.5 1234.5,256.5 1236.0,256.5 1237.5,256.6 1239.0,256.6 1240.5,256.6 1242.0,256.7 1243.5,256.7 1245.0,256.7 1246.5,256.8 1248.0,256.8 1249.5,256.8 1251.0,256.8 1252.5,256.9 1254.0,256.9 1255.5,256.9 1257.0,257.0 1258.5,257.0 1260.0,257.0 1261.5,257.1 1263.0,257.1 1264.5,257.1 1266.0,257.2 1267.5,257.2 1269.1,257.7 1270.7,258.1 1272.2,258.6 1273.8,259.1 1275.4,259.5 1277.0,260.0 1278.5,260.0 1280.0,259.9 1281.6,259.9 1283.1,259.8 1284.6,259.8 1286.1,259.7 1287.6,259.7 1289.2,259.6 1290.7,259.6 1292.2,259.5 1293.7,259.5 1295.2,259.4 1296.8,259.4 1298.3,259.3 1299.8,259.3 1301.3,259.2 1302.8,259.2 1304.4,259.1 1305.9,259.1 1307.4,259.0 1308.9,259.0 1310.4,258.9 1312.0,258.9 1313.5,258.8 1315.0,258.8 1316.5,258.8 1318.0,258.8 1319.6,258.8 1321.1,258.8 1322.6,258.7 1324.1,258.7 1325.6,258.7 1327.2,258.7 1328.7,258.7 1330.2,258.7 1331.7,258.7 1333.2,258.7 1334.8,258.6 1336.3,258.6 1337.8,258.6 1339.3,258.6 1340.8,258.6 1342.4,258.6 1343.9,258.6 1345.4,258.6 1346.9,258.5 1348.4,258.5 1350.0,258.5 1351.5,258.5 1353.0,258.5 1354.7,259.0 1356.3,259.4 1358.0,259.9 1359.7,260.4 1361.3,260.8 1363.0,261.3 1364.5,261.2 1366.0,261.1 1367.5,261.1 1369.1,261.0 1370.6,260.9 1372.1,260.8 1373.6,260.7 1375.1,260.6 1376.6,260.6 1378.1,260.5 1379.6,260.4 1381.2,260.3 1382.7,260.2 1384.2,260.1 1385.7,260.1 1387.2,260.0 1388.7,259.9 1390.2,259.8 1391.7,259.7 1393.3,259.6 1394.8,259.6 1396.3,259.5 1397.8,259.4 1399.3,259.4 1400.9,259.4 1402.4,259.4 1403.9,259.4 1405.4,259.4 1407.0,259.4 1408.5,259.4 1410.0,259.4 1411.5,259.4 1413.1,259.4 1414.6,259.4 1416.1,259.4 1417.6,259.4 1419.2,259.4 1420.7,259.4 1422.2,259.4 1423.7,259.4 1425.3,259.4 1426.8,259.4 1428.3,259.4 1429.8,259.4 1431.4,259.4 1432.9,259.4 1434.4,259.4 1435.9,259.4 1437.5,259.4 1439.0,259.4 1440.6,259.8 1442.2,260.1 1443.8,260.5 1445.4,260.9 1447.0,261.2 1448.6,261.6 1450.2,261.9 1451.8,262.3 1453.4,262.2 1454.9,262.1 1456.5,262.0 1458.1,261.9 1459.6,261.9 1461.2,261.8 1462.8,261.7 1464.3,261.6 1465.9,261.5 1467.5,261.4 1469.0,261.3 1470.6,261.2 1472.2,261.1 1473.7,261.1 1475.3,261.0 1476.9,260.9 1478.4,260.8 1480.0,260.7 1481.5,260.7 1483.0,260.7 1484.5,260.6 1486.0,260.6 1487.5,260.6 1489.0,260.6 1490.5,260.5 1492.0,260.5 1493.5,260.5 1495.0,260.5 1496.5,260.5 1498.0,260.4 1499.5,260.4 1501.0,260.4 1502.5,260.4 1504.0,260.4 1505.5,260.3 1507.0,260.3 1508.5,260.3 1510.0,260.3 1511.5,260.2 1513.0,260.2 1514.5,260.2 1516.0,260.2 1517.5,260.2 1519.0,260.1 1520.5,260.1 1522.0,260.1 1523.5,260.1 1525.0,260.0 1526.5,260.0 1528.0,260.0 1529.6,260.3 1531.2,260.6 1532.8,261.0 1534.4,261.3 1536.0,261.6 1537.6,262.0 1539.2,262.3 1540.8,262.6 1542.3,262.4 1543.8,262.3 1545.4,262.1 1546.9,261.9 1548.4,261.8 1549.9,261.6 1551.5,261.5 1553.0,261.3 1554.5,261.1 1556.0,261.0 1557.6,260.8 1559.1,260.6 1560.6,260.5 1562.1,260.3 1563.7,260.1 1565.2,260.0 1566.7,259.8 1568.2,259.6 1569.8,259.5 1571.3,259.3 1572.8,259.2 1574.3,259.0 1575.9,258.8 1577.4,258.7 1578.9,258.5 1580.4,258.5 1582.0,258.6 1583.5,258.6 1585.1,258.6 1586.6,258.6 1588.1,258.7 1589.7,258.7 1591.2,258.7 1592.7,258.8 1594.3,258.8 1595.8,258.8 1597.4,258.8 1598.9,258.9 1600.4,258.9 1602.0,258.9 1603.5,259.0 1605.1,259.0 1606.6,259.0 1608.1,259.1 1609.7,259.1 1611.2,259.1 1612.8,259.1 1614.3,259.2 1615.8,259.2 1617.4,259.2 1618.9,259.3 1620.4,259.3 1622.0,259.3 1623.5,259.3 1625.1,259.4 1626.6,259.4 1628.1,259.4 1629.6,259.3 1631.2,259.3 1632.7,259.3 1634.2,259.2 1635.7,259.2 1637.3,259.1 1638.8,259.1 1640.3,259.1 1641.8,259.0 1643.4,259.0 1644.9,259.0 1646.4,258.9 1647.9,258.9 1649.5,258.9 1651.0,258.8 1652.5,258.8 1654.0,258.8 1655.6,258.7 1657.1,258.7 1658.6,258.6 1660.1,258.6 1661.7,258.6 1663.2,258.5 1664.7,258.5 1666.2,258.6 1667.8,258.6 1669.3,258.7 1670.8,258.8 1672.3,258.9 1673.9,258.9 1675.4,259.0 1676.9,259.1 1678.5,259.1 1680.0,259.2 1681.5,259.3 1683.1,259.3 1684.6,259.4 1686.1,259.5 1687.6,259.6 1689.2,259.6 1690.7,259.7 1692.2,259.8 1693.8,259.8 1695.3,259.9 1696.8,260.0 1698.4,260.0 1699.9,260.1 1701.4,260.2 1702.9,260.3 1704.5,260.3 1706.0,260.4 1707.5,260.4 1709.0,260.4 1710.6,260.4 1712.1,260.4 1713.6,260.5 1715.1,260.5 1716.6,260.5 1718.1,260.5 1719.7,260.5 1721.2,260.5 1722.7,260.5 1724.2,260.5 1725.7,260.5 1727.2,260.5 1728.8,260.6 1730.3,260.6 1731.8,260.6 1733.3,260.6 1734.8,260.6 1736.3,260.6 1737.9,260.6 1739.4,260.6 1740.9,260.6 1742.4,260.6 1743.9,260.7 1745.4,260.7 1747.0,260.7 1748.5,260.7 1750.0,260.7" fill="none" stroke="#f4e41c" stroke-width="1.25" stroke-linejoin="round"/></g></svg><div class="lab" style="left:1586px;top:75.0px;color:#e9dc22"><span>40 V</span></div><div class="lab" style="left:1586px;top:97.9px;color:#e9dc22"><span>35 V</span></div><div class="lab" style="left:1586px;top:121.5px;color:#e9dc22"><span>30 V</span></div><div class="lab" style="left:1586px;top:144.7px;color:#e9dc22"><span>25 V</span></div><div class="lab" style="left:1586px;top:167.9px;color:#e9dc22"><span>20 V</span></div><div class="lab" style="left:1586px;top:191.0px;color:#e9dc22"><span>15 V</span></div><div class="lab" style="left:1586px;top:214.1px;color:#e9dc22"><span>10 V</span></div><div class="lab" style="left:1586px;top:237.5px;color:#e9dc22"><span>5 V</span></div><div class="lab" style="left:1586px;top:260.8px;color:#e9dc22"><span>0 V</span></div><div class="lab" style="left:1586px;top:308.8px;color:#80c22c"><span>1 V</span></div><div class="lab" style="left:1586px;top:332.1px;color:#80c22c"><span>800 mV</span></div><div class="lab" style="left:1586px;top:355.5px;color:#80c22c"><span>600 mV</span></div><div class="lab" style="left:1586px;top:378.8px;color:#80c22c"><span>400 mV</span></div><div class="lab" style="left:1586px;top:402.1px;color:#80c22c"><span>200 mV</span></div><div class="lab" style="left:1586px;top:425.1px;color:#80c22c"><span>0 V</span></div><div class="lab" style="left:1586px;top:448.0px;color:#80c22c"><span>-200 mV</span></div><div class="lab" style="left:1586px;top:471.3px;color:#80c22c"><span>-400 mV</span></div><div class="lab" style="left:1586px;top:494.5px;color:#80c22c"><span>-600 mV</span></div><div class="lab" style="left:1586px;top:543.2px;color:#e58a2c"><span>596.427 mT</span></div><div class="lab" style="left:1586px;top:566.3px;color:#e58a2c"><span>521.874 mT</span></div><div class="lab" style="left:1586px;top:589.7px;color:#e58a2c"><span>447.320 mT</span></div><div class="lab" style="left:1586px;top:612.9px;color:#e58a2c"><span>372.767 mT</span></div><div class="lab" style="left:1586px;top:636.0px;color:#e58a2c"><span>298.214 mT</span></div><div class="lab" style="left:1586px;top:659.2px;color:#e58a2c"><span>223.660 mT</span></div><div class="lab" style="left:1586px;top:682.4px;color:#e58a2c"><span>149.107 mT</span></div><div class="lab" style="left:1586px;top:705.9px;color:#e58a2c"><span>74.553 mT</span></div><div class="lab" style="left:1586px;top:728.8px;color:#e58a2c"><span>0 T</span></div><div class="lab" style="left:1586px;top:769.3px;color:#7c3ca6"><span>5.032329 kA</span></div><div class="lab" style="left:1586px;top:792.5px;color:#7c3ca6"><span>4.403288 kA</span></div><div class="lab" style="left:1586px;top:815.7px;color:#7c3ca6"><span>3.774247 kA</span></div><div class="lab" style="left:1586px;top:839.0px;color:#7c3ca6"><span>3.145205 kA</span></div><div class="lab" style="left:1586px;top:862.2px;color:#7c3ca6"><span>2.516164 kA</span></div><div class="lab" style="left:1586px;top:885.5px;color:#7c3ca6"><span>1.887123 kA</span></div><div class="lab" style="left:1586px;top:908.7px;color:#7c3ca6"><span>1.258082 kA</span></div><div class="lab" style="left:1586px;top:932.0px;color:#7c3ca6"><span>629.041 A</span></div><div class="lab" style="left:1586px;top:955.7px;color:#7c3ca6"><span>0 A</span></div><div class="xl" style="left:15.5px;top:975px">0 s</div><div class="xl" style="left:190.5px;top:975px">4 ms</div><div class="xl" style="left:365.5px;top:975px">8 ms</div><div class="xl" style="left:540.5px;top:975px">12 ms</div><div class="xl" style="left:715.5px;top:975px">16 ms</div><div class="xl" style="left:889.5px;top:975px">20 ms</div><div class="xl" style="left:1064.5px;top:975px">24 ms</div><div class="xl" style="left:1239.5px;top:975px">28 ms</div><div class="xl" style="left:1414.5px;top:975px">32 ms</div><div class="xl" style="left:1589.5px;top:975px">36 ms</div><svg class="a" style="left:1705px;top:60px" width="45" height="45" viewBox="0 0 45 45">
<path d="M6 5 H38 Q39.5 5 39.5 6.5 V38.5 Z" fill="#505050"/>
<circle cx="32.2" cy="11.4" r="4" fill="none" stroke="#a8a8a8" stroke-width="1.3"/>
<line x1="29.2" y1="14.6" x2="23.2" y2="20" stroke="#b0b0b0" stroke-width="2.4" stroke-linecap="round"/>
</svg><svg class="a" style="left:5px;top:160px" width="82" height="30" viewBox="0 0 82 30">
<path d="M4.5 1.5 H72.5 L78.5 14 L72.5 26.5 H4.5 Q1.5 26.5 1.5 23.5 V4.5 Q1.5 1.5 4.5 1.5 Z" fill="#1d1a08" stroke="#f0e226" stroke-width="1.6"/>
<line x1="28" y1="1.5" x2="28" y2="26.5" stroke="#f0e226" stroke-width="1.6"/></svg><div class="a" style="left:7px;top:160px;width:26px;text-align:center;font-size:12px;color:#f0e226;line-height:28px">C 1</div><div class="a" style="left:33px;top:160px;width:46px;text-align:center;font-size:12px;color:#f0e226;line-height:28px;white-space:nowrap">20 V</div><div class="a" style="left:101px;top:159.5px;font-size:18.5px;letter-spacing:0.45px;color:#eee02a;line-height:26px;white-space:nowrap">U_loop,coil</div><svg class="a" style="left:5px;top:394.5px" width="82" height="30" viewBox="0 0 82 30">
<path d="M4.5 1.5 H72.5 L78.5 14 L72.5 26.5 H4.5 Q1.5 26.5 1.5 23.5 V4.5 Q1.5 1.5 4.5 1.5 Z" fill="#141d08" stroke="#86cc2c" stroke-width="1.6"/>
<line x1="28" y1="1.5" x2="28" y2="26.5" stroke="#86cc2c" stroke-width="1.6"/></svg><div class="a" style="left:7px;top:394.5px;width:26px;text-align:center;font-size:12px;color:#86cc2c;line-height:28px">C 4</div><div class="a" style="left:33px;top:394.5px;width:46px;text-align:center;font-size:12px;color:#86cc2c;line-height:28px;white-space:nowrap">200 mV</div><div class="a" style="left:101px;top:394px;font-size:18.5px;letter-spacing:0.45px;color:#86cc2c;line-height:26px;white-space:nowrap">U_Photod</div><div class="a" style="left:42px;top:735px;width:13px;height:1px;background:#f0892a"></div><div class="a" style="left:42px;top:962px;width:13px;height:1px;background:#7a2f9a"></div><svg class="a" style="left:5px;top:722px" width="42" height="28" viewBox="0 0 42 28">
<path d="M4.5 1.2 H24.5 L36.3 13.2 L24.5 25.6 H4.5 Q1.3 25.6 1.3 22.4 V4.4 Q1.3 1.2 4.5 1.2 Z" fill="#1d1206" stroke="#e8892a" stroke-width="1.3"/></svg><div class="a" style="left:7px;top:722px;width:30px;text-align:center;font-size:12.5px;letter-spacing:0.3px;color:#f08c2a;line-height:26px">M 1</div><div class="a" style="left:53px;top:717.5px;font-size:26.5px;color:#f08c2a;line-height:30px;white-space:nowrap">B_t</div><svg class="a" style="left:5px;top:948.2px" width="42" height="28" viewBox="0 0 42 28">
<path d="M4.5 1.2 H24.5 L36.3 13.2 L24.5 25.6 H4.5 Q1.3 25.6 1.3 22.4 V4.4 Q1.3 1.2 4.5 1.2 Z" fill="#722c8e" stroke="#7a2e9e" stroke-width="1.3"/></svg><div class="a" style="left:7px;top:948.2px;width:30px;text-align:center;font-size:12.5px;letter-spacing:0.3px;color:#ffffff;line-height:26px">M 2</div><div class="a" style="left:53px;top:948px;font-size:19px;letter-spacing:-0.5px;color:#7a2f9a;line-height:24px;white-space:nowrap">I_p</div><svg class="a" style="left:40px;top:56px" width="30" height="44" viewBox="0 0 30 44">
<path d="M4.8 2 H25.2 L15 11.5 Z" fill="#f28c28"/>
<path d="M5.9 13 H24.1 V32.5 H19 L15 39.5 L11 32.5 H5.9 Z" fill="#000" stroke="#f28c28" stroke-width="2.2"/>
<path d="M10.6 18 H19.6 M15 18 V28" stroke="#f28c28" stroke-width="2.2"/>
</svg><svg class="a" style="left:580px;top:30px" width="600" height="28" viewBox="0 0 600 28">
<path d="M13 6.5 H6.5 V23.5 H13" fill="none" stroke="#e6e6e6" stroke-width="1.2"/>
<path d="M580 6.5 H587 V23.5 H580" fill="none" stroke="#e6e6e6" stroke-width="1.2"/>
<line x1="7" y1="15" x2="587" y2="15" stroke="#b8b8b8" stroke-width="1.6"/>
<path d="M16 3 H31 L23.5 8 Z" fill="#f28c28"/>
<path d="M17.2 10.5 H29.8 V22 H26 L23.5 26 L21 22 H17.2 Z" fill="#000" stroke="#f28c28" stroke-width="1.8"/>
<path d="M20.5 13.5 H26.5 M23.5 13.5 V19.5" stroke="#f28c28" stroke-width="1.8"/>
</svg></body></html>
